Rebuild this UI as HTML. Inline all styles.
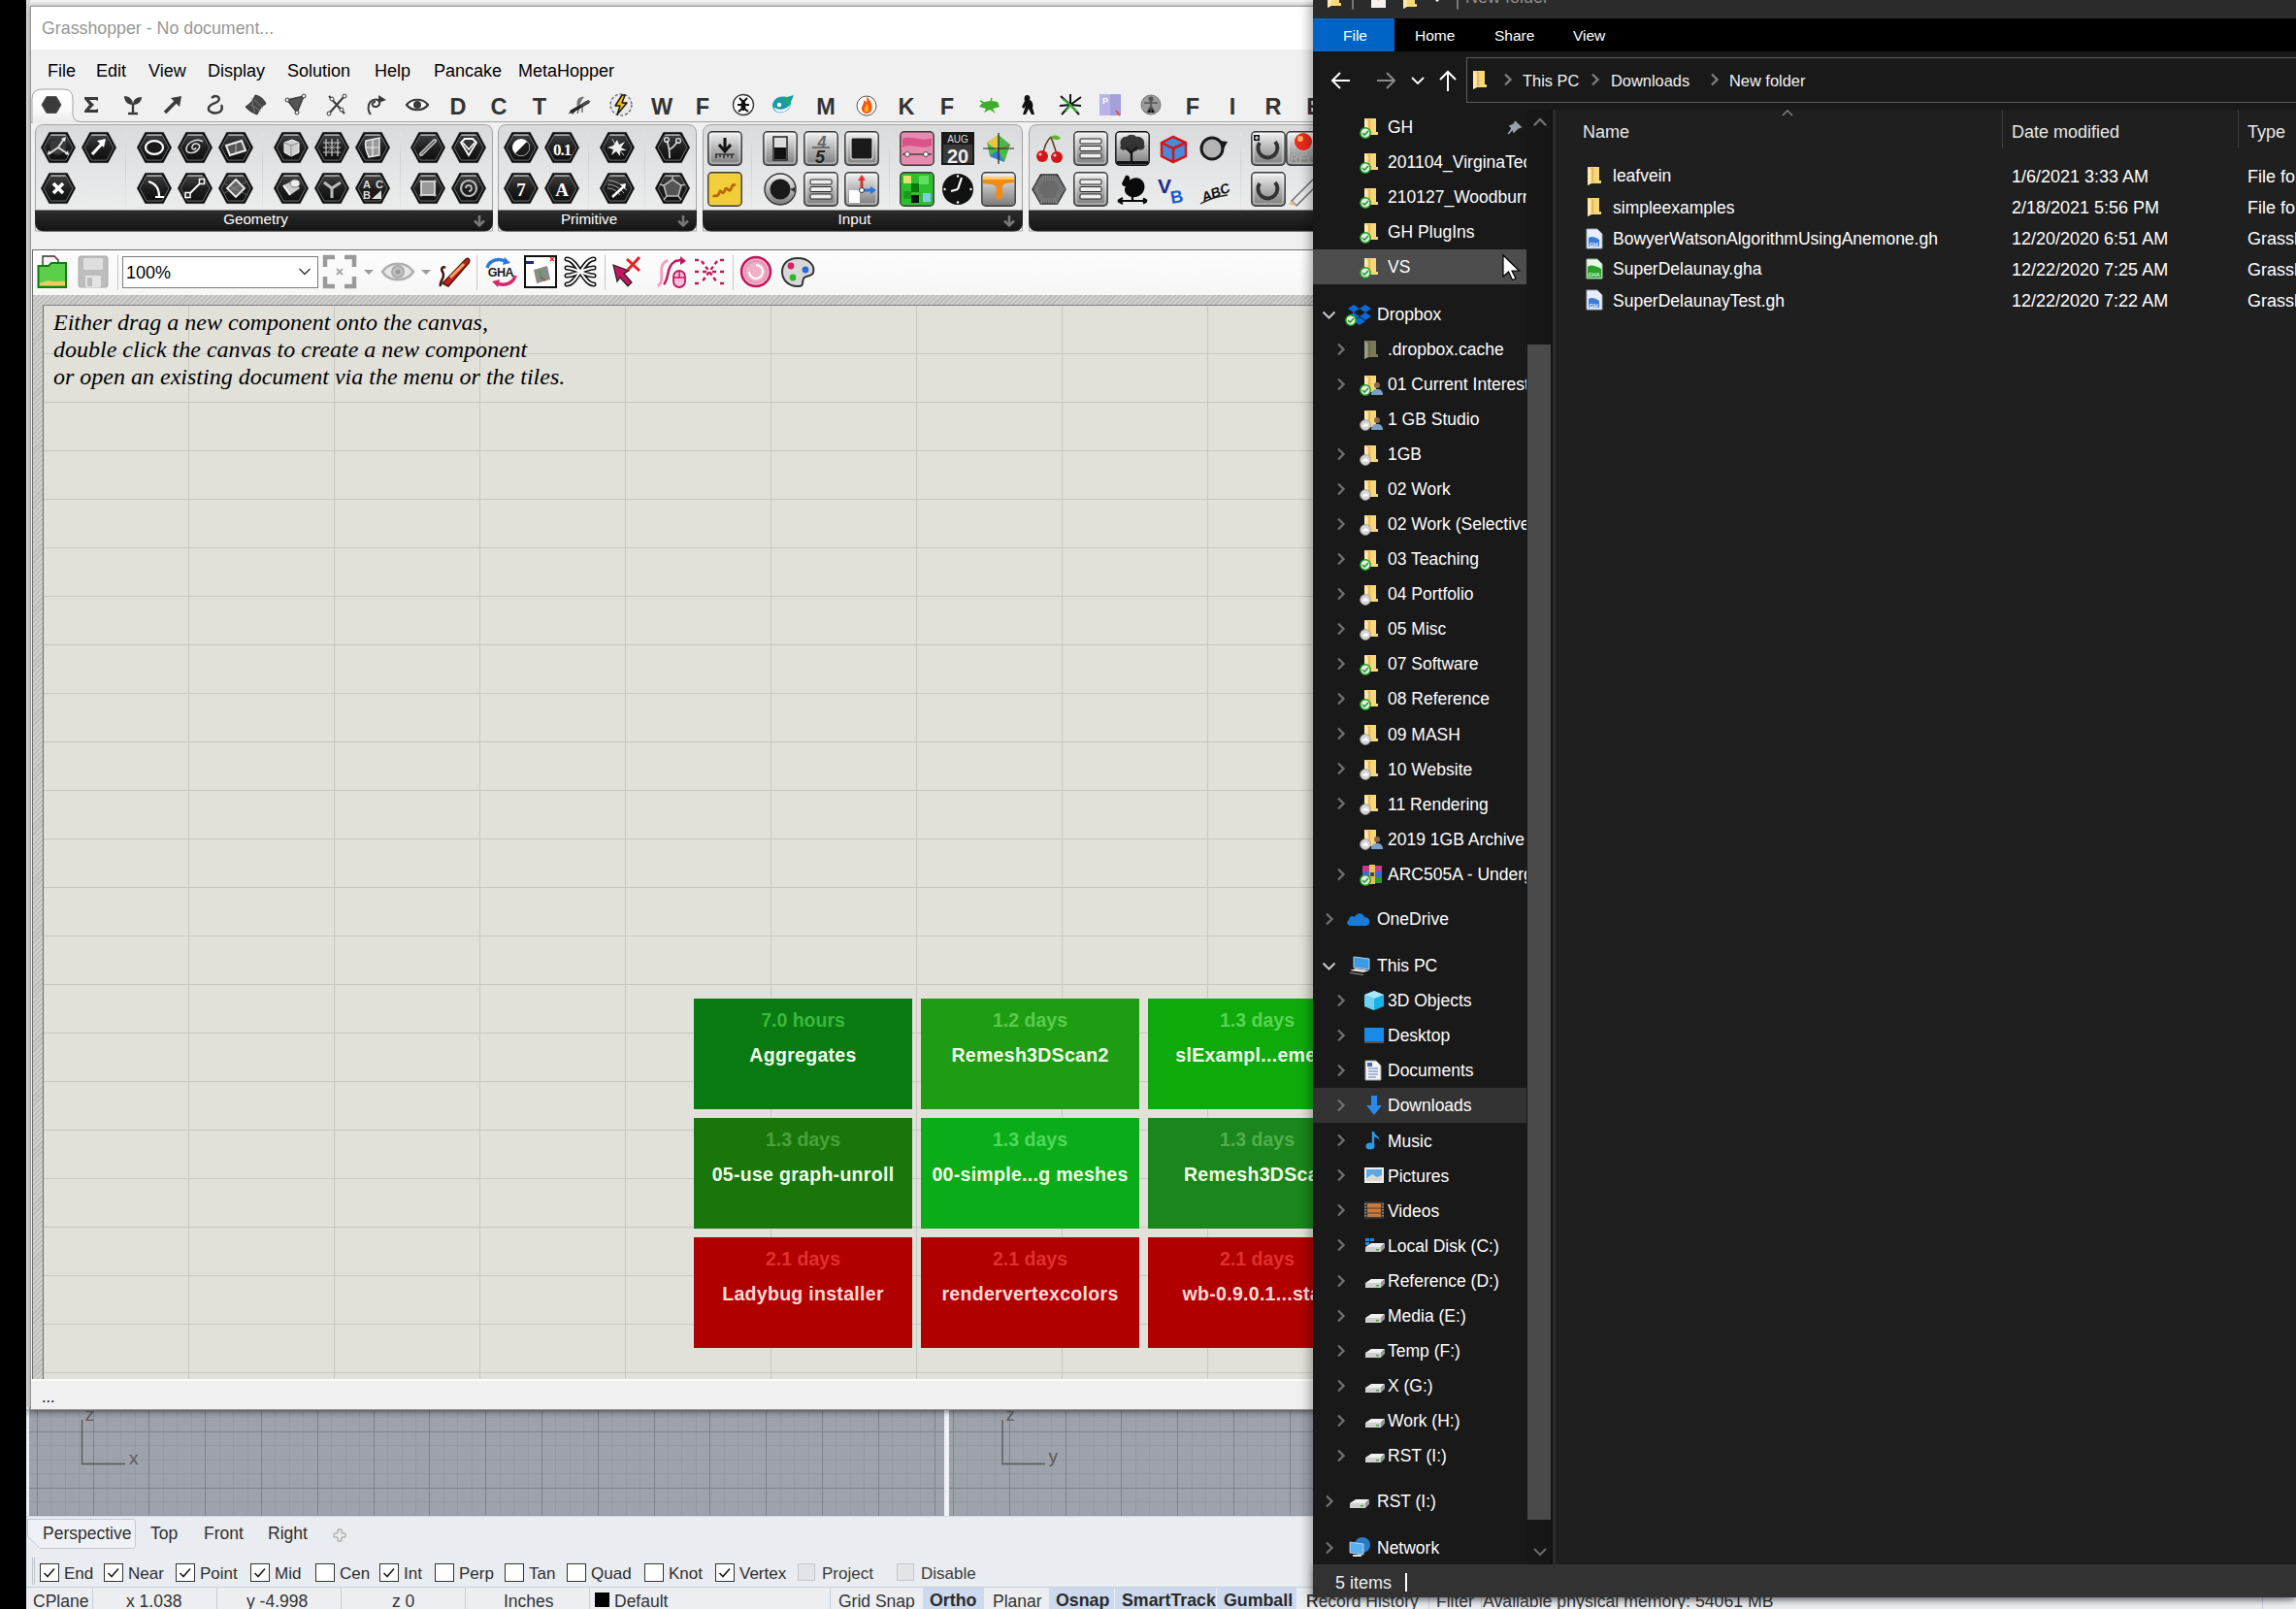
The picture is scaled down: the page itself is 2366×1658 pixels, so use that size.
<!DOCTYPE html><html><head><meta charset="utf-8"><title>Grasshopper</title><style>
*{margin:0;padding:0;box-sizing:border-box}
html,body{width:2366px;height:1658px;overflow:hidden;background:#000}
body{position:relative;font-family:"Liberation Sans",sans-serif}
.a{position:absolute}
.t{position:absolute;white-space:nowrap;line-height:1}
svg{position:absolute;overflow:visible}
</style></head><body>
<div class="a" style="left:27px;top:0;width:2339px;height:1658px;background:#e9ecf0"></div>
<div class="a" style="left:27px;top:0;width:2339px;height:8px;background:linear-gradient(#f4f4f4,#d8d8d8)"></div>
<div class="a" style="left:28px;top:0;width:3px;height:1450px;background:#d6d7d9"></div>
<div class="a" style="left:27px;top:1450px;width:3px;height:112px;background:#eef2f7"></div>
<svg style="left:30px;top:1450px" width="943" height="112" viewBox="0 0 943 112"><rect width="943" height="112" fill="#9ea3ab"/><path d="M22.5 0V112 M37.5 0V112 M51.5 0V112 M80.5 0V112 M94.5 0V112 M109.5 0V112 M138.5 0V112 M152.5 0V112 M167.5 0V112 M196.5 0V112 M210.5 0V112 M225.5 0V112 M253.5 0V112 M268.5 0V112 M282.5 0V112 M311.5 0V112 M326.5 0V112 M340.5 0V112 M369.5 0V112 M384.5 0V112 M398.5 0V112 M427.5 0V112 M441.5 0V112 M456.5 0V112 M485.5 0V112 M499.5 0V112 M514.5 0V112 M542.5 0V112 M557.5 0V112 M571.5 0V112 M600.5 0V112 M615.5 0V112 M629.5 0V112 M658.5 0V112 M672.5 0V112 M687.5 0V112 M716.5 0V112 M730.5 0V112 M745.5 0V112 M774.5 0V112 M788.5 0V112 M803.5 0V112 M831.5 0V112 M846.5 0V112 M860.5 0V112 M889.5 0V112 M904.5 0V112 M918.5 0V112 M0 10.5H943 M0 39.5H943 M0 54.5H943 M0 68.5H943 M0 97.5H943 M0 111.5H943" stroke="#939aa2" stroke-width="1" fill="none"/><path d="M8.5 0V112 M66.5 0V112 M123.5 0V112 M181.5 0V112 M239.5 0V112 M297.5 0V112 M355.5 0V112 M412.5 0V112 M470.5 0V112 M528.5 0V112 M586.5 0V112 M644.5 0V112 M701.5 0V112 M759.5 0V112 M817.5 0V112 M875.5 0V112 M933.5 0V112 M0 25.5H943 M0 83.5H943" stroke="#7e848c" stroke-width="1" fill="none"/></svg>
<div class="a" style="left:973px;top:1450px;width:5px;height:112px;background:#eef2f7"></div>
<svg style="left:978px;top:1450px" width="400" height="112" viewBox="0 0 400 112"><rect width="400" height="112" fill="#9ea3ab"/><path d="M18.5 0V112 M33.5 0V112 M47.5 0V112 M76.5 0V112 M91.5 0V112 M105.5 0V112 M134.5 0V112 M149.5 0V112 M163.5 0V112 M192.5 0V112 M206.5 0V112 M221.5 0V112 M250.5 0V112 M264.5 0V112 M279.5 0V112 M307.5 0V112 M322.5 0V112 M336.5 0V112 M365.5 0V112 M380.5 0V112 M394.5 0V112 M0 10.5H400 M0 39.5H400 M0 54.5H400 M0 68.5H400 M0 97.5H400 M0 111.5H400" stroke="#939aa2" stroke-width="1" fill="none"/><path d="M4.5 0V112 M62.5 0V112 M120.5 0V112 M177.5 0V112 M235.5 0V112 M293.5 0V112 M351.5 0V112 M0 25.5H400 M0 83.5H400" stroke="#7e848c" stroke-width="1" fill="none"/></svg>
<div class="a" style="left:27px;top:1452px;width:1340px;height:9px;background:linear-gradient(rgba(0,0,0,.22),rgba(0,0,0,0))"></div>
<svg style="left:0;top:0" width="2366" height="1658"><path d="M84.5 1463V1508.5H129M1033 1463V1508.5H1077" stroke="#555" stroke-width="1.3" fill="none"/></svg>
<div class="t" style="left:87.5px;top:1448.4px;font-size:19px;color:#5a5a5a;">z</div>
<div class="t" style="left:133px;top:1493.4px;font-size:19px;color:#5a5a5a;">x</div>
<div class="t" style="left:1036.5px;top:1448.4px;font-size:19px;color:#5a5a5a;">z</div>
<div class="t" style="left:1080.5px;top:1490.9px;font-size:19px;color:#5a5a5a;">y</div>
<div class="a" style="left:27px;top:1562px;width:1340px;height:1px;background:#d0d8e2"></div>
<svg style="left:0;top:0" width="400" height="1658"><path d="M28.5 1565.5H137Q139.5 1565.5 139.5 1568V1592.5Q139.5 1595.5 137 1595.5H41L28.5 1583Z" fill="#eef1f5" stroke="#c3cad4" stroke-width="1"/></svg>
<div class="t" style="left:44px;top:1572.2px;font-size:17.5px;color:#2e2e2e;">Perspective</div>
<div class="t" style="left:155px;top:1572.2px;font-size:17.5px;color:#2e2e2e;">Top</div>
<div class="t" style="left:210px;top:1572.2px;font-size:17.5px;color:#2e2e2e;">Front</div>
<div class="t" style="left:276px;top:1572.2px;font-size:17.5px;color:#2e2e2e;">Right</div>
<svg style="left:343px;top:1575px" width="14" height="14"><path d="M5 1H9V5H13V9H9V13H5V9H1V5H5Z" fill="none" stroke="#9a9a9a" stroke-width="1"/></svg>
<div class="a" style="left:33px;top:1605px;width:1px;height:28px;background:#c0c6ce"></div><div class="a" style="left:35px;top:1605px;width:1px;height:28px;background:#c0c6ce"></div>
<div class="a" style="left:41px;top:1610.5px;width:19.5px;height:19.5px;border:1.5px solid #333;background:#fff"></div>
<svg style="left:41px;top:1610.5px" width="19.5" height="19.5"><path d="M4.5 10L8 13.5L15 5.5" stroke="#222" stroke-width="1.7" fill="none"/></svg>
<div class="t" style="left:66px;top:1612.6px;font-size:17px;color:#2e2e2e;">End</div>
<div class="a" style="left:107px;top:1610.5px;width:19.5px;height:19.5px;border:1.5px solid #333;background:#fff"></div>
<svg style="left:107px;top:1610.5px" width="19.5" height="19.5"><path d="M4.5 10L8 13.5L15 5.5" stroke="#222" stroke-width="1.7" fill="none"/></svg>
<div class="t" style="left:132px;top:1612.6px;font-size:17px;color:#2e2e2e;">Near</div>
<div class="a" style="left:181px;top:1610.5px;width:19.5px;height:19.5px;border:1.5px solid #333;background:#fff"></div>
<svg style="left:181px;top:1610.5px" width="19.5" height="19.5"><path d="M4.5 10L8 13.5L15 5.5" stroke="#222" stroke-width="1.7" fill="none"/></svg>
<div class="t" style="left:206px;top:1612.6px;font-size:17px;color:#2e2e2e;">Point</div>
<div class="a" style="left:258px;top:1610.5px;width:19.5px;height:19.5px;border:1.5px solid #333;background:#fff"></div>
<svg style="left:258px;top:1610.5px" width="19.5" height="19.5"><path d="M4.5 10L8 13.5L15 5.5" stroke="#222" stroke-width="1.7" fill="none"/></svg>
<div class="t" style="left:283px;top:1612.6px;font-size:17px;color:#2e2e2e;">Mid</div>
<div class="a" style="left:325px;top:1610.5px;width:19.5px;height:19.5px;border:1.5px solid #333;background:#fff"></div>
<div class="t" style="left:350px;top:1612.6px;font-size:17px;color:#2e2e2e;">Cen</div>
<div class="a" style="left:391px;top:1610.5px;width:19.5px;height:19.5px;border:1.5px solid #333;background:#fff"></div>
<svg style="left:391px;top:1610.5px" width="19.5" height="19.5"><path d="M4.5 10L8 13.5L15 5.5" stroke="#222" stroke-width="1.7" fill="none"/></svg>
<div class="t" style="left:416px;top:1612.6px;font-size:17px;color:#2e2e2e;">Int</div>
<div class="a" style="left:448px;top:1610.5px;width:19.5px;height:19.5px;border:1.5px solid #333;background:#fff"></div>
<div class="t" style="left:473px;top:1612.6px;font-size:17px;color:#2e2e2e;">Perp</div>
<div class="a" style="left:520px;top:1610.5px;width:19.5px;height:19.5px;border:1.5px solid #333;background:#fff"></div>
<div class="t" style="left:545px;top:1612.6px;font-size:17px;color:#2e2e2e;">Tan</div>
<div class="a" style="left:584px;top:1610.5px;width:19.5px;height:19.5px;border:1.5px solid #333;background:#fff"></div>
<div class="t" style="left:609px;top:1612.6px;font-size:17px;color:#2e2e2e;">Quad</div>
<div class="a" style="left:664px;top:1610.5px;width:19.5px;height:19.5px;border:1.5px solid #333;background:#fff"></div>
<div class="t" style="left:689px;top:1612.6px;font-size:17px;color:#2e2e2e;">Knot</div>
<div class="a" style="left:737px;top:1610.5px;width:19.5px;height:19.5px;border:1.5px solid #333;background:#fff"></div>
<svg style="left:737px;top:1610.5px" width="19.5" height="19.5"><path d="M4.5 10L8 13.5L15 5.5" stroke="#222" stroke-width="1.7" fill="none"/></svg>
<div class="t" style="left:762px;top:1612.6px;font-size:17px;color:#2e2e2e;">Vertex</div>
<div class="a" style="left:822px;top:1611px;width:18px;height:18px;border:1px solid #c4c8ce;background:#e2e4e8"></div>
<div class="t" style="left:847px;top:1612.6px;font-size:17px;color:#3a3a3a;">Project</div>
<div class="a" style="left:924px;top:1611px;width:18px;height:18px;border:1px solid #c4c8ce;background:#e2e4e8"></div>
<div class="t" style="left:949px;top:1612.6px;font-size:17px;color:#3a3a3a;">Disable</div>
<div class="a" style="left:27px;top:1635px;width:2339px;height:1px;background:#c6cfdb"></div>
<div class="a" style="left:27px;top:1636px;width:2339px;height:22px;background:#eceef2"></div>
<div class="a" style="left:95px;top:1636px;width:1px;height:22px;background:#c6cfdb"></div>
<div class="a" style="left:223px;top:1636px;width:1px;height:22px;background:#c6cfdb"></div>
<div class="a" style="left:351px;top:1636px;width:1px;height:22px;background:#c6cfdb"></div>
<div class="a" style="left:479px;top:1636px;width:1px;height:22px;background:#c6cfdb"></div>
<div class="a" style="left:607px;top:1636px;width:1px;height:22px;background:#c6cfdb"></div>
<div class="a" style="left:855px;top:1636px;width:1px;height:22px;background:#c6cfdb"></div>
<div class="t" style="left:34px;top:1641.7px;font-size:17.5px;color:#333;">CPlane</div>
<div class="t" style="left:130px;top:1641.7px;font-size:17.5px;color:#333;">x 1.038</div>
<div class="t" style="left:254px;top:1641.7px;font-size:17.5px;color:#333;">y -4.998</div>
<div class="t" style="left:404px;top:1641.7px;font-size:17.5px;color:#333;">z 0</div>
<div class="t" style="left:519px;top:1641.7px;font-size:17.5px;color:#333;">Inches</div>
<div class="t" style="left:633px;top:1641.7px;font-size:17.5px;color:#333;">Default</div>
<div class="t" style="left:864px;top:1641.7px;font-size:17.5px;color:#333;">Grid Snap</div>
<div class="t" style="left:1023px;top:1641.7px;font-size:17.5px;color:#333;">Planar</div>
<div class="t" style="left:1346px;top:1641.7px;font-size:17.5px;color:#333;">Record History</div>
<div class="t" style="left:1480px;top:1641.7px;font-size:17.5px;color:#333;">Filter</div>
<div class="t" style="left:1528px;top:1641.5px;font-size:17.7px;color:#333;">Available physical memory: 54061 MB</div>
<div class="a" style="left:613px;top:1641px;width:15px;height:15px;background:#000"></div>
<div class="a" style="left:951px;top:1636px;width:63px;height:22px;background:#cdd9ed"></div>
<div class="t" style="left:958px;top:1641.4px;font-size:17.8px;color:#2a2a2a;font-weight:bold">Ortho</div>
<div class="a" style="left:1081px;top:1636px;width:67px;height:22px;background:#cdd9ed"></div>
<div class="t" style="left:1088px;top:1641.4px;font-size:17.8px;color:#2a2a2a;font-weight:bold">Osnap</div>
<div class="a" style="left:1149px;top:1636px;width:104px;height:22px;background:#cdd9ed"></div>
<div class="t" style="left:1156px;top:1641.4px;font-size:17.8px;color:#2a2a2a;font-weight:bold">SmartTrack</div>
<div class="a" style="left:1254px;top:1636px;width:82px;height:22px;background:#cdd9ed"></div>
<div class="t" style="left:1261px;top:1641.4px;font-size:17.8px;color:#2a2a2a;font-weight:bold">Gumball</div>
<div class="t" style="left:1346px;top:1641.7px;font-size:17.5px;color:#333;">R</div>
<div class="a" style="left:1472px;top:1646px;width:1px;height:12px;background:#c6cfdb"></div>
<div class="a" style="left:1526px;top:1646px;width:1px;height:12px;background:#c6cfdb"></div>
<div class="a" style="left:2331px;top:1646px;width:1px;height:12px;background:#c6cfdb"></div>
<div class="a" style="left:31px;top:6px;width:1400px;height:1447px;background:#f0f0f0;border:1px solid #9a9a9a;box-shadow:0 1px 5px rgba(0,0,0,.35)"></div>
<div class="a" style="left:32px;top:7px;width:1400px;height:44px;background:#fff"></div>
<div class="t" style="left:43px;top:20.9px;font-size:17.8px;color:#979797;">Grasshopper - No document...</div>
<div class="t" style="left:49px;top:63.8px;font-size:18px;color:#000;">File</div>
<div class="t" style="left:99px;top:63.8px;font-size:18px;color:#000;">Edit</div>
<div class="t" style="left:153px;top:63.8px;font-size:18px;color:#000;">View</div>
<div class="t" style="left:214px;top:63.8px;font-size:18px;color:#000;">Display</div>
<div class="t" style="left:296px;top:63.8px;font-size:18px;color:#000;">Solution</div>
<div class="t" style="left:386px;top:63.8px;font-size:18px;color:#000;">Help</div>
<div class="t" style="left:447px;top:63.8px;font-size:18px;color:#000;">Pancake</div>
<div class="t" style="left:534px;top:63.8px;font-size:18px;color:#000;">MetaHopper</div>
<div class="a" style="left:33px;top:256.5px;width:1400px;height:1.5px;background:#6e6e6e"></div>
<div class="a" style="left:33px;top:257px;width:1px;height:47px;background:#6e6e6e"></div>
<div class="a" style="left:34px;top:258px;width:1400px;height:46px;background:linear-gradient(#fdfdfd,#f6f6f6)"></div>
<svg width="0" height="0" style="position:absolute"><defs>
<linearGradient id="hg" x1="0" y1="0" x2="0" y2="1"><stop offset="0" stop-color="#404040"/><stop offset=".5" stop-color="#1f1f1f"/><stop offset="1" stop-color="#0f0f0f"/></linearGradient>
<linearGradient id="hgr" x1="0" y1="0" x2="0" y2="1"><stop offset="0" stop-color="#777"/><stop offset="1" stop-color="#222"/></linearGradient>
<linearGradient id="pg" x1="0" y1="0" x2="0" y2="1"><stop offset="0" stop-color="#d9dadc"/><stop offset=".5" stop-color="#e5e6e7"/><stop offset="1" stop-color="#f0f0f0"/></linearGradient>
<linearGradient id="sqg" x1="0" y1="0" x2="0" y2="1"><stop offset="0" stop-color="#f4f4f4"/><stop offset=".5" stop-color="#b5b5b5"/><stop offset="1" stop-color="#7a7a7a"/></linearGradient>
<linearGradient id="lbg" x1="0" y1="0" x2="0" y2="1"><stop offset="0" stop-color="#2c2c2c"/><stop offset="1" stop-color="#141414"/></linearGradient>
<linearGradient id="wg" x1="0" y1="0" x2="0" y2="1"><stop offset="0" stop-color="#ffffff"/><stop offset="1" stop-color="#9a9a9a"/></linearGradient>
<symbol id="hx" viewBox="0 0 36 32"><path d="M0.4 16L8.7 0.4H27.3L35.6 16L27.3 31.6H8.7Z" fill="#0b0b0b" stroke="#0b0b0b" stroke-width=".6" stroke-linejoin="round"/><path d="M2.9 16L10.1 2.9H25.9L33.1 16L25.9 29.1H10.1Z" fill="url(#hg)" stroke="#7a7a7a" stroke-width=".9"/><path d="M10.4 3.1H25.6" stroke="#e0e0e0" stroke-width="1"/></symbol>
<symbol id="sq" viewBox="0 0 36 36"><rect x=".8" y=".8" width="34.4" height="34.4" rx="4" fill="url(#sqg)" stroke="#3a3a3a" stroke-width="1.4"/><rect x="3" y="3" width="30" height="30" rx="2.5" fill="none" stroke="#fff" stroke-opacity=".6" stroke-width="1"/></symbol>
</defs></svg>
<div class="a" style="left:32px;top:125px;width:1330px;height:1px;background:#a3a3a3"></div>
<svg style="left:32px;top:91px" width="60" height="36"><defs><linearGradient id="tabg" x1="0" y1="0" x2="0" y2="1"><stop offset="0" stop-color="#fff"/><stop offset=".6" stop-color="#fafafa"/><stop offset="1" stop-color="#e9e9e9"/></linearGradient></defs><path d="M1 36V11Q1 1 11 1H34Q43 1 43 11V26Q43 34.5 52 34.5H60" fill="url(#tabg)" stroke="#a3a3a3" stroke-width="1"/></svg>
<svg style="left:40px;top:95px" width="26" height="26" viewBox="0 0 26 26"><path d="M3 13L8 4.5H18L23 13L18 21.5H8Z" fill="#3b3b3b" stroke="#555" stroke-width="1"/></svg>
<svg style="left:81px;top:95px" width="26" height="26" viewBox="0 0 26 26"><path d="M6 5H20V9L18 8H11L16 13L11 18H18L20 17V21H6V19L11 13L6 7Z" fill="#3a3a3a"/></svg>
<svg style="left:124px;top:95px" width="26" height="26" viewBox="0 0 26 26"><path d="M13 22V12M8 22H18" stroke="#3a3a3a" stroke-width="2.4" fill="none"/><path d="M13 13C7 13 4 9 4 4C10 4 13 8 13 13Z M13 13C19 13 22 9 22 5C16 5 13 8 13 13Z" fill="#3a3a3a"/></svg>
<svg style="left:165px;top:95px" width="26" height="26" viewBox="0 0 26 26"><path d="M5 21L17 9" stroke="#3a3a3a" stroke-width="3.5"/><path d="M11 6L22 4L20 15Z" fill="#3a3a3a"/></svg>
<svg style="left:208px;top:95px" width="26" height="26" viewBox="0 0 26 26"><path d="M10 6C14 2 20 5 17 9C14 12 8 12 7 16C6 21 14 23 19 20C21 18 21 15 20 13" stroke="#3a3a3a" stroke-width="2.4" fill="none"/></svg>
<svg style="left:250px;top:95px" width="26" height="26" viewBox="0 0 26 26"><path d="M3 15C8 12 11 8 13 3C18 4 22 7 24 12C20 14 17 18 15 23C10 21 6 19 3 15Z" fill="#474747" stroke="#333" stroke-width="1"/><path d="M8 13C12 15 16 17 19 20M12 8C15 10 18 13 21 17M10 6C10 12 11 17 13 21" stroke="#888" stroke-width=".8" fill="none"/></svg>
<svg style="left:292px;top:95px" width="26" height="26" viewBox="0 0 26 26"><path d="M4 8L21 4L14 21Z" fill="#555" stroke="#3a3a3a" stroke-width="1.5"/><circle cx="4" cy="8" r="2" fill="#eee" stroke="#3a3a3a"/><circle cx="21" cy="4" r="2" fill="#eee" stroke="#3a3a3a"/><circle cx="14" cy="21" r="2" fill="#eee" stroke="#3a3a3a"/></svg>
<svg style="left:334px;top:95px" width="26" height="26" viewBox="0 0 26 26"><path d="M5 22L21 4M5 4L21 22" stroke="#3a3a3a" stroke-width="2"/><circle cx="5" cy="22" r="2" fill="#eee" stroke="#3a3a3a"/><circle cx="21" cy="4" r="2" fill="#eee" stroke="#3a3a3a"/><circle cx="8" cy="7" r="2" fill="#eee" stroke="#3a3a3a"/><circle cx="18" cy="18" r="2" fill="#eee" stroke="#3a3a3a"/></svg>
<svg style="left:375px;top:95px" width="26" height="26" viewBox="0 0 26 26"><path d="M7 23C3 18 4 10 10 8C16 6 19 13 13 15C8 16 7 10 12 10" stroke="#3a3a3a" stroke-width="2" fill="none"/><path d="M15 3L23 8L15 11Z" fill="#3a3a3a"/></svg>
<svg style="left:417px;top:95px" width="26" height="26" viewBox="0 0 26 26"><path d="M2 13C7 6 19 6 24 13C19 20 7 20 2 13Z" fill="#fff" stroke="#3a3a3a" stroke-width="2.2"/><circle cx="13" cy="13" r="4" fill="#3a3a3a"/></svg>
<div class="t" style="left:452px;width:40px;text-align:center;top:99px;font-size:23.5px;font-weight:bold;color:#333">D</div>
<div class="t" style="left:494px;width:40px;text-align:center;top:99px;font-size:23.5px;font-weight:bold;color:#333">C</div>
<div class="t" style="left:536px;width:40px;text-align:center;top:99px;font-size:23.5px;font-weight:bold;color:#333">T</div>
<div class="t" style="left:662px;width:40px;text-align:center;top:99px;font-size:23.5px;font-weight:bold;color:#333">W</div>
<div class="t" style="left:704px;width:40px;text-align:center;top:99px;font-size:23.5px;font-weight:bold;color:#333">F</div>
<div class="t" style="left:831px;width:40px;text-align:center;top:99px;font-size:23.5px;font-weight:bold;color:#333">M</div>
<div class="t" style="left:914px;width:40px;text-align:center;top:99px;font-size:23.5px;font-weight:bold;color:#333">K</div>
<div class="t" style="left:956px;width:40px;text-align:center;top:99px;font-size:23.5px;font-weight:bold;color:#333">F</div>
<div class="t" style="left:1209px;width:40px;text-align:center;top:99px;font-size:23.5px;font-weight:bold;color:#333">F</div>
<div class="t" style="left:1250px;width:40px;text-align:center;top:99px;font-size:23.5px;font-weight:bold;color:#333">I</div>
<div class="t" style="left:1292px;width:40px;text-align:center;top:99px;font-size:23.5px;font-weight:bold;color:#333">R</div>
<div class="t" style="left:1334px;width:40px;text-align:center;top:99px;font-size:23.5px;font-weight:bold;color:#333">E</div>
<svg style="left:585px;top:95px" width="26" height="26" viewBox="0 0 26 26"><path d="M4 20L21 10" stroke="#222" stroke-width="3.5" stroke-linecap="round"/><path d="M10 15C8 8 12 4 17 5C14 8 13 11 12 14Z M13 14C16 9 21 8 24 9C20 12 17 14 14 15Z" fill="#555" opacity=".8"/><path d="M8 18L5 23M12 16L10 22M15 15L15 21M3 21L1 22" stroke="#333" stroke-width="1"/></svg>
<svg style="left:627px;top:95px" width="26" height="26" viewBox="0 0 26 26"><circle cx="13" cy="13" r="11" fill="#e8e8e8" stroke="#555" stroke-width="1.2" stroke-dasharray="3 2"/><path d="M14 3L7 14H12L9 23L19 11H14L17 3Z" fill="#f2c01a" stroke="#111" stroke-width="1.4" stroke-linejoin="round"/></svg>
<svg style="left:753px;top:95px" width="26" height="26" viewBox="0 0 26 26"><circle cx="13" cy="13" r="10.5" fill="#fafafa" stroke="#333" stroke-width="1.3"/><path d="M13 8V19M9 6L13 10L17 6M7 13H19M8 20L13 16L18 20" stroke="#111" stroke-width="2" fill="none"/><ellipse cx="13" cy="14" rx="2.5" ry="5" fill="#111"/></svg>
<svg style="left:794px;top:95px" width="26" height="26" viewBox="0 0 26 26"><path d="M2 13C3 6 10 3 17 5L24 3L21 10C22 17 15 22 8 21C4 20 2 17 2 13Z" fill="#1a9aa8"/><path d="M3 15C8 19 16 19 21 12C19 20 10 23 5 19Z" fill="#e8f4f8"/><circle cx="9" cy="13" r="2.2" fill="#fff"/><path d="M14 5L20 12" stroke="#2ab050" stroke-width="2.5"/></svg>
<svg style="left:880px;top:95px" width="26" height="26" viewBox="0 0 26 26"><circle cx="13" cy="14" r="10" fill="#fff" stroke="#555" stroke-width="1"/><path d="M13 4C18 10 20 14 18 19C16 23 9 23 8 18C7 14 11 12 10 8C13 10 14 12 13 4Z" fill="#f05a10"/><path d="M13 12C15 15 16 17 14 20C12 21 10 19 11 17Z" fill="#ffb020"/></svg>
<svg style="left:1006px;top:95px" width="26" height="26" viewBox="0 0 26 26"><path d="M3 15C7 9 14 8 22 10L24 15L17 17L20 22L14 18L8 21L10 17Z" fill="#3dae2b"/><path d="M4 9L10 12M16 6L15 10" stroke="#3dae2b" stroke-width="1.5"/></svg>
<svg style="left:1047px;top:95px" width="26" height="26" viewBox="0 0 26 26"><path d="M11 3C14 3 15 5 14 8C17 9 18 13 17 16L19 23H16L13 17L10 23H7L10 14L8 17L6 15L9 9C8 6 9 3 11 3Z" fill="#111"/></svg>
<svg style="left:1090px;top:95px" width="26" height="26" viewBox="0 0 26 26"><path d="M13 13L3 4M13 13L24 5M13 13L4 23M13 13L22 23M13 13L13 2M13 13L2 14M13 13L24 14" stroke="#111" stroke-width="2"/><path d="M13 13L5 7M13 13L20 20M13 13L8 20" stroke="#39b339" stroke-width="2"/></svg>
<svg style="left:1131px;top:95px" width="26" height="26" viewBox="0 0 26 26"><rect x="2" y="2" width="22" height="22" fill="#b8b4e8"/><rect x="13" y="2" width="11" height="22" fill="#a3a0dc"/><text x="5" y="12" font-size="9" fill="#fff" font-family="Liberation Sans" font-weight="bold">P</text><path d="M19 19L23 24" stroke="#e44" stroke-width="2"/></svg>
<svg style="left:1173px;top:95px" width="26" height="26" viewBox="0 0 26 26"><circle cx="13" cy="13" r="10" fill="#9a9a9a"/><circle cx="13" cy="13" r="10" fill="none" stroke="#777"/><path d="M13 5V21M6 11H20M9 21L13 14L17 21" stroke="#555" stroke-width="1.5"/><circle cx="13" cy="7" r="2.5" fill="#555"/></svg>
<svg style="left:36px;top:129px" width="472" height="110" viewBox="0 1 472 110"><path d="M0.5 110V9Q0.5 0.5 9 0.5H463Q471.5 0.5 471.5 9V110Z" fill="url(#pg)" stroke="#a4a4a4" stroke-width="1"/><path d="M0.5 89H471.5V101Q471.5 110 463 110H9Q0.5 110 0.5 101Z" fill="url(#lbg)" stroke="#2a2a2a" stroke-width="1"/><path d="M458 94V104M453 99.5L458 104.5L463 99.5" stroke="#777" stroke-width="2.6" fill="none"/></svg>
<div class="t" style="left:36px;width:455px;text-align:center;top:217.9px;font-size:15.2px;color:#fff">Geometry</div>
<svg style="left:513px;top:129px" width="205" height="110" viewBox="0 1 205 110"><path d="M0.5 110V9Q0.5 0.5 9 0.5H196Q204.5 0.5 204.5 9V110Z" fill="url(#pg)" stroke="#a4a4a4" stroke-width="1"/><path d="M0.5 89H204.5V101Q204.5 110 196 110H9Q0.5 110 0.5 101Z" fill="url(#lbg)" stroke="#2a2a2a" stroke-width="1"/><path d="M191 94V104M186 99.5L191 104.5L196 99.5" stroke="#777" stroke-width="2.6" fill="none"/></svg>
<div class="t" style="left:513px;width:188px;text-align:center;top:217.9px;font-size:15.2px;color:#fff">Primitive</div>
<svg style="left:724px;top:129px" width="330" height="110" viewBox="0 1 330 110"><path d="M0.5 110V9Q0.5 0.5 9 0.5H321Q329.5 0.5 329.5 9V110Z" fill="url(#pg)" stroke="#a4a4a4" stroke-width="1"/><path d="M0.5 89H329.5V101Q329.5 110 321 110H9Q0.5 110 0.5 101Z" fill="url(#lbg)" stroke="#2a2a2a" stroke-width="1"/><path d="M316 94V104M311 99.5L316 104.5L321 99.5" stroke="#777" stroke-width="2.6" fill="none"/></svg>
<div class="t" style="left:724px;width:313px;text-align:center;top:217.9px;font-size:15.2px;color:#fff">Input</div>
<svg style="left:1060px;top:129px" width="340" height="110" viewBox="0 1 340 110"><path d="M0.5 110V9Q0.5 0.5 9 0.5H331Q339.5 0.5 339.5 9V110Z" fill="url(#pg)" stroke="#a4a4a4" stroke-width="1"/><path d="M0.5 89H339.5V101Q339.5 110 331 110H9Q0.5 110 0.5 101Z" fill="url(#lbg)" stroke="#2a2a2a" stroke-width="1"/></svg>
<div class="a" style="left:129px;top:136px;width:1px;height:80px;background:linear-gradient(#e2e3e6,#cfd0d3 40%,#e6e6e6)"></div>
<div class="a" style="left:270px;top:136px;width:1px;height:80px;background:linear-gradient(#e2e3e6,#cfd0d3 40%,#e6e6e6)"></div>
<div class="a" style="left:412px;top:136px;width:1px;height:80px;background:linear-gradient(#e2e3e6,#cfd0d3 40%,#e6e6e6)"></div>
<div class="a" style="left:606px;top:136px;width:1px;height:80px;background:linear-gradient(#e2e3e6,#cfd0d3 40%,#e6e6e6)"></div>
<div class="a" style="left:664px;top:136px;width:1px;height:80px;background:linear-gradient(#e2e3e6,#cfd0d3 40%,#e6e6e6)"></div>
<div class="a" style="left:774px;top:136px;width:1px;height:80px;background:linear-gradient(#e2e3e6,#cfd0d3 40%,#e6e6e6)"></div>
<div class="a" style="left:916px;top:136px;width:1px;height:80px;background:linear-gradient(#e2e3e6,#cfd0d3 40%,#e6e6e6)"></div>
<div class="a" style="left:1278px;top:136px;width:1px;height:80px;background:linear-gradient(#e2e3e6,#cfd0d3 40%,#e6e6e6)"></div>
<svg style="left:41.6px;top:136.0px" width="36" height="32" viewBox="0 0 36 32"><path d="M0.4 16L8.7 0.4H27.3L35.6 16L27.3 31.6H8.7Z" fill="#0b0b0b" stroke="#0b0b0b" stroke-width=".6" stroke-linejoin="round"/><path d="M2.9 16L10.1 2.9H25.9L33.1 16L25.9 29.1H10.1Z" fill="url(#hg)" stroke="#7a7a7a" stroke-width=".9"/><path d="M10.4 3.1H25.6" stroke="#e0e0e0" stroke-width="1"/><path d="M10 10L19 7L26 10L26 20L18 24L10 21Z" fill="#3a3a3a"/><path d="M18 16L9 22M18 16L27 22M18 16L24 7" stroke="#ddd" stroke-width="2"/><path d="M7 24L8 19L11 22Z M29 24L25 23L28 19Z M26 5L21 7L25 10Z" fill="#eee"/></svg>
<svg style="left:83.9px;top:136.0px" width="36" height="32" viewBox="0 0 36 32"><path d="M0.4 16L8.7 0.4H27.3L35.6 16L27.3 31.6H8.7Z" fill="#0b0b0b" stroke="#0b0b0b" stroke-width=".6" stroke-linejoin="round"/><path d="M2.9 16L10.1 2.9H25.9L33.1 16L25.9 29.1H10.1Z" fill="url(#hg)" stroke="#7a7a7a" stroke-width=".9"/><path d="M10.4 3.1H25.6" stroke="#e0e0e0" stroke-width="1"/><path d="M11 23L22 11" stroke="#fff" stroke-width="3.2"/><path d="M16 9L25 7L23 16Z" fill="#fff"/></svg>
<svg style="left:41.6px;top:178.0px" width="36" height="32" viewBox="0 0 36 32"><path d="M0.4 16L8.7 0.4H27.3L35.6 16L27.3 31.6H8.7Z" fill="#0b0b0b" stroke="#0b0b0b" stroke-width=".6" stroke-linejoin="round"/><path d="M2.9 16L10.1 2.9H25.9L33.1 16L25.9 29.1H10.1Z" fill="url(#hg)" stroke="#7a7a7a" stroke-width=".9"/><path d="M10.4 3.1H25.6" stroke="#e0e0e0" stroke-width="1"/><path d="M13 11L23 21M23 11L13 21" stroke="#fff" stroke-width="3.6"/></svg>
<svg style="left:140.9px;top:136.0px" width="36" height="32" viewBox="0 0 36 32"><path d="M0.4 16L8.7 0.4H27.3L35.6 16L27.3 31.6H8.7Z" fill="#0b0b0b" stroke="#0b0b0b" stroke-width=".6" stroke-linejoin="round"/><path d="M2.9 16L10.1 2.9H25.9L33.1 16L25.9 29.1H10.1Z" fill="url(#hg)" stroke="#7a7a7a" stroke-width=".9"/><path d="M10.4 3.1H25.6" stroke="#e0e0e0" stroke-width="1"/><ellipse cx="18" cy="16" rx="9" ry="6.8" stroke="#fff" stroke-width="2.2" fill="#1a1a1a"/></svg>
<svg style="left:183.0px;top:136.0px" width="36" height="32" viewBox="0 0 36 32"><path d="M0.4 16L8.7 0.4H27.3L35.6 16L27.3 31.6H8.7Z" fill="#0b0b0b" stroke="#0b0b0b" stroke-width=".6" stroke-linejoin="round"/><path d="M2.9 16L10.1 2.9H25.9L33.1 16L25.9 29.1H10.1Z" fill="url(#hg)" stroke="#7a7a7a" stroke-width=".9"/><path d="M10.4 3.1H25.6" stroke="#e0e0e0" stroke-width="1"/><path d="M26 10C21 6 10 10 9 17C8 23 18 23 22 17C25 12 17 10 15 15C14 18 18 19 19 16" stroke="#ddd" stroke-width="1.6" fill="none"/></svg>
<svg style="left:225.0px;top:136.0px" width="36" height="32" viewBox="0 0 36 32"><path d="M0.4 16L8.7 0.4H27.3L35.6 16L27.3 31.6H8.7Z" fill="#0b0b0b" stroke="#0b0b0b" stroke-width=".6" stroke-linejoin="round"/><path d="M2.9 16L10.1 2.9H25.9L33.1 16L25.9 29.1H10.1Z" fill="url(#hg)" stroke="#7a7a7a" stroke-width=".9"/><path d="M10.4 3.1H25.6" stroke="#e0e0e0" stroke-width="1"/><path d="M8 14L24 9L28 19L12 24Z" stroke="#eee" stroke-width="2" fill="#555"/><path d="M18 12V21" stroke="#bbb"/></svg>
<svg style="left:140.9px;top:178.0px" width="36" height="32" viewBox="0 0 36 32"><path d="M0.4 16L8.7 0.4H27.3L35.6 16L27.3 31.6H8.7Z" fill="#0b0b0b" stroke="#0b0b0b" stroke-width=".6" stroke-linejoin="round"/><path d="M2.9 16L10.1 2.9H25.9L33.1 16L25.9 29.1H10.1Z" fill="url(#hg)" stroke="#7a7a7a" stroke-width=".9"/><path d="M10.4 3.1H25.6" stroke="#e0e0e0" stroke-width="1"/><path d="M12 9C19 11 23 16 23 24M19 25H28" stroke="#fff" stroke-width="2.2" fill="none"/></svg>
<svg style="left:183.0px;top:178.0px" width="36" height="32" viewBox="0 0 36 32"><path d="M0.4 16L8.7 0.4H27.3L35.6 16L27.3 31.6H8.7Z" fill="#0b0b0b" stroke="#0b0b0b" stroke-width=".6" stroke-linejoin="round"/><path d="M2.9 16L10.1 2.9H25.9L33.1 16L25.9 29.1H10.1Z" fill="url(#hg)" stroke="#7a7a7a" stroke-width=".9"/><path d="M10.4 3.1H25.6" stroke="#e0e0e0" stroke-width="1"/><path d="M11 23L25 9" stroke="#fff" stroke-width="1.8"/><rect x="8" y="20.5" width="5" height="5" stroke="#fff" stroke-width="1.5" fill="#222"/><rect x="22.5" y="6.5" width="5" height="5" stroke="#fff" stroke-width="1.5" fill="#222"/></svg>
<svg style="left:225.0px;top:178.0px" width="36" height="32" viewBox="0 0 36 32"><path d="M0.4 16L8.7 0.4H27.3L35.6 16L27.3 31.6H8.7Z" fill="#0b0b0b" stroke="#0b0b0b" stroke-width=".6" stroke-linejoin="round"/><path d="M2.9 16L10.1 2.9H25.9L33.1 16L25.9 29.1H10.1Z" fill="url(#hg)" stroke="#7a7a7a" stroke-width=".9"/><path d="M10.4 3.1H25.6" stroke="#e0e0e0" stroke-width="1"/><path d="M18 7L27 16L18 25L9 16Z" stroke="#eee" stroke-width="1.8" fill="#666"/><path d="M6 11L30 23M6 21L30 9" stroke="#aaa" stroke-width=".8" opacity=".6"/></svg>
<svg style="left:281.7px;top:136.0px" width="36" height="32" viewBox="0 0 36 32"><path d="M0.4 16L8.7 0.4H27.3L35.6 16L27.3 31.6H8.7Z" fill="#0b0b0b" stroke="#0b0b0b" stroke-width=".6" stroke-linejoin="round"/><path d="M2.9 16L10.1 2.9H25.9L33.1 16L25.9 29.1H10.1Z" fill="url(#hg)" stroke="#7a7a7a" stroke-width=".9"/><path d="M10.4 3.1H25.6" stroke="#e0e0e0" stroke-width="1"/><path d="M11 11L19 8L26 11V21L18 25L11 21Z" fill="#cfcfcf" stroke="#fff" stroke-width="1"/><path d="M11 11L18 14L26 11M18 14V25" stroke="#888" stroke-width="1" fill="none"/></svg>
<svg style="left:324.0px;top:136.0px" width="36" height="32" viewBox="0 0 36 32"><path d="M0.4 16L8.7 0.4H27.3L35.6 16L27.3 31.6H8.7Z" fill="#0b0b0b" stroke="#0b0b0b" stroke-width=".6" stroke-linejoin="round"/><path d="M2.9 16L10.1 2.9H25.9L33.1 16L25.9 29.1H10.1Z" fill="url(#hg)" stroke="#7a7a7a" stroke-width=".9"/><path d="M10.4 3.1H25.6" stroke="#e0e0e0" stroke-width="1"/><path d="M9 11H27M9 16H27M9 21H27M12 7V25M18 7V25M24 7V25" stroke="#ccc" stroke-width="1.2"/><path d="M11 9L25 23M25 9L11 23" stroke="#999" stroke-width=".8"/></svg>
<svg style="left:366.0px;top:136.0px" width="36" height="32" viewBox="0 0 36 32"><path d="M0.4 16L8.7 0.4H27.3L35.6 16L27.3 31.6H8.7Z" fill="#0b0b0b" stroke="#0b0b0b" stroke-width=".6" stroke-linejoin="round"/><path d="M2.9 16L10.1 2.9H25.9L33.1 16L25.9 29.1H10.1Z" fill="url(#hg)" stroke="#7a7a7a" stroke-width=".9"/><path d="M10.4 3.1H25.6" stroke="#e0e0e0" stroke-width="1"/><path d="M11 9L25 6V24L14 26C12 20 9 16 11 9Z" fill="#999" stroke="#eee" stroke-width="1.4"/><path d="M18 7V25M11 16H25" stroke="#eee" stroke-width="1.2"/></svg>
<svg style="left:281.7px;top:178.0px" width="36" height="32" viewBox="0 0 36 32"><path d="M0.4 16L8.7 0.4H27.3L35.6 16L27.3 31.6H8.7Z" fill="#0b0b0b" stroke="#0b0b0b" stroke-width=".6" stroke-linejoin="round"/><path d="M2.9 16L10.1 2.9H25.9L33.1 16L25.9 29.1H10.1Z" fill="url(#hg)" stroke="#7a7a7a" stroke-width=".9"/><path d="M10.4 3.1H25.6" stroke="#e0e0e0" stroke-width="1"/><path d="M10 13L20 8L27 16L17 23Z" fill="#ccc"/><ellipse cx="22" cy="11" rx="5" ry="4" fill="#eee" stroke="#777"/><path d="M10 13L17 23" stroke="#fff" stroke-width="2"/></svg>
<svg style="left:324.0px;top:178.0px" width="36" height="32" viewBox="0 0 36 32"><path d="M0.4 16L8.7 0.4H27.3L35.6 16L27.3 31.6H8.7Z" fill="#0b0b0b" stroke="#0b0b0b" stroke-width=".6" stroke-linejoin="round"/><path d="M2.9 16L10.1 2.9H25.9L33.1 16L25.9 29.1H10.1Z" fill="url(#hg)" stroke="#7a7a7a" stroke-width=".9"/><path d="M10.4 3.1H25.6" stroke="#e0e0e0" stroke-width="1"/><path d="M18 16L10 10M18 16L27 10M18 16V26" stroke="#bbb" stroke-width="3"/></svg>
<svg style="left:366.0px;top:178.0px" width="36" height="32" viewBox="0 0 36 32"><path d="M0.4 16L8.7 0.4H27.3L35.6 16L27.3 31.6H8.7Z" fill="#0b0b0b" stroke="#0b0b0b" stroke-width=".6" stroke-linejoin="round"/><path d="M2.9 16L10.1 2.9H25.9L33.1 16L25.9 29.1H10.1Z" fill="url(#hg)" stroke="#7a7a7a" stroke-width=".9"/><path d="M10.4 3.1H25.6" stroke="#e0e0e0" stroke-width="1"/><text x="8" y="16" font-size="11" fill="#ddd" font-family="Liberation Sans" font-weight="bold">A</text><text x="21" y="16" font-size="11" fill="#ddd" font-family="Liberation Sans" font-weight="bold">C</text><text x="8" y="27" font-size="11" fill="#ddd" font-family="Liberation Sans" font-weight="bold">B</text><path d="M17 27L27 18V27Z" fill="#ddd"/></svg>
<svg style="left:423.0px;top:136.0px" width="36" height="32" viewBox="0 0 36 32"><path d="M0.4 16L8.7 0.4H27.3L35.6 16L27.3 31.6H8.7Z" fill="#0b0b0b" stroke="#0b0b0b" stroke-width=".6" stroke-linejoin="round"/><path d="M2.9 16L10.1 2.9H25.9L33.1 16L25.9 29.1H10.1Z" fill="url(#hg)" stroke="#7a7a7a" stroke-width=".9"/><path d="M10.4 3.1H25.6" stroke="#e0e0e0" stroke-width="1"/><path d="M11 23L25 9" stroke="#ccc" stroke-width="4" stroke-linecap="round"/><path d="M11 23L25 9" stroke="#555" stroke-width="1.5"/></svg>
<svg style="left:465.0px;top:136.0px" width="36" height="32" viewBox="0 0 36 32"><path d="M0.4 16L8.7 0.4H27.3L35.6 16L27.3 31.6H8.7Z" fill="#0b0b0b" stroke="#0b0b0b" stroke-width=".6" stroke-linejoin="round"/><path d="M2.9 16L10.1 2.9H25.9L33.1 16L25.9 29.1H10.1Z" fill="url(#hg)" stroke="#7a7a7a" stroke-width=".9"/><path d="M10.4 3.1H25.6" stroke="#e0e0e0" stroke-width="1"/><path d="M10 11L14 7H22L26 11L18 24Z" stroke="#fff" stroke-width="1.8" fill="#333"/><path d="M12 11L18 18L24 11" stroke="#fff" stroke-width="1.5" fill="none"/></svg>
<svg style="left:423.0px;top:178.0px" width="36" height="32" viewBox="0 0 36 32"><path d="M0.4 16L8.7 0.4H27.3L35.6 16L27.3 31.6H8.7Z" fill="#0b0b0b" stroke="#0b0b0b" stroke-width=".6" stroke-linejoin="round"/><path d="M2.9 16L10.1 2.9H25.9L33.1 16L25.9 29.1H10.1Z" fill="url(#hg)" stroke="#7a7a7a" stroke-width=".9"/><path d="M10.4 3.1H25.6" stroke="#e0e0e0" stroke-width="1"/><rect x="11" y="9" width="14" height="14" fill="#999" stroke="#eee" stroke-width="1.5"/><path d="M9 9H27M11 7V25M25 7V25M9 23H27" stroke="#ccc" stroke-width=".8"/></svg>
<svg style="left:465.0px;top:178.0px" width="36" height="32" viewBox="0 0 36 32"><path d="M0.4 16L8.7 0.4H27.3L35.6 16L27.3 31.6H8.7Z" fill="#0b0b0b" stroke="#0b0b0b" stroke-width=".6" stroke-linejoin="round"/><path d="M2.9 16L10.1 2.9H25.9L33.1 16L25.9 29.1H10.1Z" fill="url(#hg)" stroke="#7a7a7a" stroke-width=".9"/><path d="M10.4 3.1H25.6" stroke="#e0e0e0" stroke-width="1"/><circle cx="18" cy="16" r="8" stroke="#bbb" stroke-width="2.2" fill="none"/><path d="M15 16A3 3 0 1 1 18 19" stroke="#bbb" stroke-width="1.8" fill="none"/></svg>
<svg style="left:518.6px;top:136.0px" width="36" height="32" viewBox="0 0 36 32"><path d="M0.4 16L8.7 0.4H27.3L35.6 16L27.3 31.6H8.7Z" fill="#0b0b0b" stroke="#0b0b0b" stroke-width=".6" stroke-linejoin="round"/><path d="M2.9 16L10.1 2.9H25.9L33.1 16L25.9 29.1H10.1Z" fill="url(#hg)" stroke="#7a7a7a" stroke-width=".9"/><path d="M10.4 3.1H25.6" stroke="#e0e0e0" stroke-width="1"/><circle cx="18" cy="16" r="8" stroke="#fff" stroke-width="2" fill="#fff"/><path d="M24 10A8 8 0 0 1 12 22Z" fill="#1b1b1b"/></svg>
<svg style="left:561.0px;top:136.0px" width="36" height="32" viewBox="0 0 36 32"><path d="M0.4 16L8.7 0.4H27.3L35.6 16L27.3 31.6H8.7Z" fill="#0b0b0b" stroke="#0b0b0b" stroke-width=".6" stroke-linejoin="round"/><path d="M2.9 16L10.1 2.9H25.9L33.1 16L25.9 29.1H10.1Z" fill="url(#hg)" stroke="#7a7a7a" stroke-width=".9"/><path d="M10.4 3.1H25.6" stroke="#e0e0e0" stroke-width="1"/><text x="18" y="23.5" text-anchor="middle" font-size="17" fill="#fff" font-family="Liberation Serif" font-weight="bold" letter-spacing="-1">0.1</text></svg>
<svg style="left:518.6px;top:178.0px" width="36" height="32" viewBox="0 0 36 32"><path d="M0.4 16L8.7 0.4H27.3L35.6 16L27.3 31.6H8.7Z" fill="#0b0b0b" stroke="#0b0b0b" stroke-width=".6" stroke-linejoin="round"/><path d="M2.9 16L10.1 2.9H25.9L33.1 16L25.9 29.1H10.1Z" fill="url(#hg)" stroke="#7a7a7a" stroke-width=".9"/><path d="M10.4 3.1H25.6" stroke="#e0e0e0" stroke-width="1"/><text x="18" y="24" text-anchor="middle" font-size="19" fill="#fff" font-family="Liberation Serif" font-weight="bold">7</text></svg>
<svg style="left:561.0px;top:178.0px" width="36" height="32" viewBox="0 0 36 32"><path d="M0.4 16L8.7 0.4H27.3L35.6 16L27.3 31.6H8.7Z" fill="#0b0b0b" stroke="#0b0b0b" stroke-width=".6" stroke-linejoin="round"/><path d="M2.9 16L10.1 2.9H25.9L33.1 16L25.9 29.1H10.1Z" fill="url(#hg)" stroke="#7a7a7a" stroke-width=".9"/><path d="M10.4 3.1H25.6" stroke="#e0e0e0" stroke-width="1"/><text x="18" y="24" text-anchor="middle" font-size="19" fill="#fff" font-family="Liberation Serif" font-weight="bold">A</text></svg>
<svg style="left:617.7px;top:136.0px" width="36" height="32" viewBox="0 0 36 32"><path d="M0.4 16L8.7 0.4H27.3L35.6 16L27.3 31.6H8.7Z" fill="#0b0b0b" stroke="#0b0b0b" stroke-width=".6" stroke-linejoin="round"/><path d="M2.9 16L10.1 2.9H25.9L33.1 16L25.9 29.1H10.1Z" fill="url(#hg)" stroke="#7a7a7a" stroke-width=".9"/><path d="M10.4 3.1H25.6" stroke="#e0e0e0" stroke-width="1"/><path d="M18 8L20 13L26 10L22 16L28 19L21 19L21 25L17 20L12 24L14 18L8 16L14 14Z" fill="#eee"/><path d="M13 7L16 13M25 24L21 19" stroke="#ccc" stroke-width="1"/></svg>
<svg style="left:617.7px;top:178.0px" width="36" height="32" viewBox="0 0 36 32"><path d="M0.4 16L8.7 0.4H27.3L35.6 16L27.3 31.6H8.7Z" fill="#0b0b0b" stroke="#0b0b0b" stroke-width=".6" stroke-linejoin="round"/><path d="M2.9 16L10.1 2.9H25.9L33.1 16L25.9 29.1H10.1Z" fill="url(#hg)" stroke="#7a7a7a" stroke-width=".9"/><path d="M10.4 3.1H25.6" stroke="#e0e0e0" stroke-width="1"/><path d="M8 12C14 12 20 15 25 21M8 16C13 16 17 18 21 23M9 8C17 8 24 13 28 18" stroke="#aaa" stroke-width="1" fill="none"/><path d="M13 25L25 14" stroke="#fff" stroke-width="2.4"/><path d="M21 12L27 11L26 17Z" fill="#fff"/></svg>
<svg style="left:675.0px;top:136.0px" width="36" height="32" viewBox="0 0 36 32"><path d="M0.4 16L8.7 0.4H27.3L35.6 16L27.3 31.6H8.7Z" fill="#0b0b0b" stroke="#0b0b0b" stroke-width=".6" stroke-linejoin="round"/><path d="M2.9 16L10.1 2.9H25.9L33.1 16L25.9 29.1H10.1Z" fill="url(#hg)" stroke="#7a7a7a" stroke-width=".9"/><path d="M10.4 3.1H25.6" stroke="#e0e0e0" stroke-width="1"/><path d="M15 27C15 20 15 15 12 9M15 18C19 16 21 13 23 10" stroke="#ccc" stroke-width="1.8" fill="none"/><circle cx="12" cy="8" r="2.4" stroke="#ddd" stroke-width="1.4" fill="none"/><circle cx="24" cy="9" r="2.4" stroke="#ddd" stroke-width="1.4" fill="none"/></svg>
<svg style="left:675.0px;top:178.0px" width="36" height="32" viewBox="0 0 36 32"><path d="M0.4 16L8.7 0.4H27.3L35.6 16L27.3 31.6H8.7Z" fill="#0b0b0b" stroke="#0b0b0b" stroke-width=".6" stroke-linejoin="round"/><path d="M2.9 16L10.1 2.9H25.9L33.1 16L25.9 29.1H10.1Z" fill="url(#hg)" stroke="#7a7a7a" stroke-width=".9"/><path d="M10.4 3.1H25.6" stroke="#e0e0e0" stroke-width="1"/><path d="M18 7L27 13L24 24H12L9 13Z" stroke="#bbb" stroke-width="1.6" fill="#555"/><path d="M18 7L18 3M27 13L31 12M24 24L27 28M12 24L9 28M9 13L5 12" stroke="#bbb" stroke-width="1.4"/></svg>
<svg style="left:729.0px;top:134.6px" width="36" height="36" viewBox="0 0 36 36"><rect x=".8" y=".8" width="34.4" height="34.4" rx="4" fill="url(#sqg)" stroke="#3a3a3a" stroke-width="1.4"/><rect x="3" y="3" width="30" height="30" rx="2.5" fill="none" stroke="#fff" stroke-opacity=".6" stroke-width="1"/><path d="M18 7V20M12 14L18 21L24 14" stroke="#111" stroke-width="3" fill="none"/><path d="M8 24H28M9 24V28M13 24V27M17 24V28M21 24V27M25 24V28" stroke="#111" stroke-width="1.2"/></svg>
<svg style="left:729.0px;top:177.0px" width="36" height="36" viewBox="0 0 36 36"><rect x=".8" y=".8" width="34.4" height="34.4" rx="4" fill="#f2cf3a" stroke="#3a3a3a" stroke-width="1.4"/><path d="M6 26C8 22 10 28 12 22C14 15 15 27 18 19C20 12 22 25 25 16C26 12 29 14 29 14" stroke="#b8680a" stroke-width="2.8" fill="none" stroke-linejoin="round"/></svg>
<svg style="left:786.0px;top:134.6px" width="36" height="36" viewBox="0 0 36 36"><rect x=".8" y=".8" width="34.4" height="34.4" rx="4" fill="url(#sqg)" stroke="#3a3a3a" stroke-width="1.4"/><rect x="3" y="3" width="30" height="30" rx="2.5" fill="none" stroke="#fff" stroke-opacity=".6" stroke-width="1"/><rect x="11" y="6" width="14" height="24" fill="#ddd" stroke="#222" stroke-width="1.5"/><rect x="12" y="17" width="12" height="12" fill="#111"/></svg>
<svg style="left:786.0px;top:177.0px" width="36" height="36" viewBox="0 0 36 36"><circle cx="18" cy="18" r="16" fill="url(#sqg)" stroke="#333" stroke-width="1.4"/><circle cx="18" cy="18" r="10.5" fill="#1a1a1a"/><path d="M28 18L33 16V21Z" fill="#333"/></svg>
<svg style="left:828.0px;top:134.6px" width="36" height="36" viewBox="0 0 36 36"><rect x=".8" y=".8" width="34.4" height="34.4" rx="4" fill="url(#sqg)" stroke="#3a3a3a" stroke-width="1.4"/><rect x="3" y="3" width="30" height="30" rx="2.5" fill="none" stroke="#fff" stroke-opacity=".6" stroke-width="1"/><text x="19" y="17" text-anchor="middle" font-size="16" fill="#666" font-family="Liberation Sans" font-weight="bold" font-style="italic">4</text><text x="17" y="33" text-anchor="middle" font-size="18" fill="#222" font-family="Liberation Sans" font-weight="bold" font-style="italic">5</text><path d="M9 17H27" stroke="#555" stroke-width="1.5"/></svg>
<svg style="left:828.0px;top:177.0px" width="36" height="36" viewBox="0 0 36 36"><rect x=".8" y=".8" width="34.4" height="34.4" rx="4" fill="url(#sqg)" stroke="#3a3a3a" stroke-width="1.4"/><rect x="3" y="3" width="30" height="30" rx="2.5" fill="none" stroke="#fff" stroke-opacity=".6" stroke-width="1"/><rect x="7" y="8" width="22" height="5" rx="1" fill="#eee" stroke="#222"/><rect x="7" y="15.5" width="22" height="5" rx="1" fill="#eee" stroke="#222"/><rect x="7" y="23" width="22" height="5" rx="1" fill="#eee" stroke="#222"/></svg>
<svg style="left:870.0px;top:134.6px" width="36" height="36" viewBox="0 0 36 36"><rect x=".8" y=".8" width="34.4" height="34.4" rx="4" fill="url(#sqg)" stroke="#3a3a3a" stroke-width="1.4"/><rect x="3" y="3" width="30" height="30" rx="2.5" fill="none" stroke="#fff" stroke-opacity=".6" stroke-width="1"/><rect x="7" y="7" width="22" height="22" rx="2" fill="#1a1a1a" stroke="#ddd" stroke-width="1.2"/></svg>
<svg style="left:870.0px;top:177.0px" width="36" height="36" viewBox="0 0 36 36"><rect x=".8" y=".8" width="34.4" height="34.4" rx="4" fill="url(#sqg)" stroke="#3a3a3a" stroke-width="1.4"/><rect x="3" y="3" width="30" height="30" rx="2.5" fill="none" stroke="#fff" stroke-opacity=".6" stroke-width="1"/><rect x="5" y="19" width="11" height="13" fill="#fff"/><path d="M18 19V7" stroke="#d33" stroke-width="3"/><path d="M14 9L18 3L22 9Z" fill="#d33"/><path d="M18 19H28" stroke="#27d" stroke-width="3"/><path d="M27 15L33 19L27 23Z" fill="#27d"/><circle cx="18" cy="19" r="2.5" fill="#fff" stroke="#333"/></svg>
<svg style="left:926.5px;top:134.6px" width="36" height="36" viewBox="0 0 36 36"><rect x=".8" y=".8" width="34.4" height="34.4" rx="4" fill="#e88ab0" stroke="#3a3a3a" stroke-width="1.4"/><path d="M3 8C12 4 24 12 33 7V15C24 20 12 12 3 17Z" fill="#d0407a" opacity=".7"/><path d="M3 24H33" stroke="#444" stroke-width="1.5"/><circle cx="8" cy="24" r="2.5" fill="#fff" stroke="#444"/><circle cx="27" cy="24" r="2.5" fill="#fff" stroke="#444"/></svg>
<svg style="left:926.5px;top:177.0px" width="36" height="36" viewBox="0 0 36 36"><rect x=".8" y=".8" width="34.4" height="34.4" rx="4" fill="#2cc02c" stroke="#3a3a3a" stroke-width="1.4"/><rect x="4" y="4" width="8" height="8" fill="#e8e070"/><rect x="20" y="4" width="10" height="9" fill="#60e060"/><rect x="12" y="12" width="8" height="9" fill="#0a7a0a"/><rect x="4" y="20" width="8" height="8" fill="#1a9a1a"/><rect x="12" y="24" width="8" height="8" fill="#111"/><rect x="24" y="22" width="8" height="9" fill="#7ad0e0"/></svg>
<svg style="left:969.0px;top:134.6px" width="36" height="36" viewBox="0 0 36 36"><rect x="1" y="1" width="34" height="34" fill="#1a1a1a"/><text x="18" y="12" text-anchor="middle" font-size="10" fill="#ddd" font-family="Liberation Sans">AUG</text><rect x="3" y="14" width="30" height="19" fill="#3a3a3a"/><text x="18" y="33" text-anchor="middle" font-size="20" fill="#eee" font-family="Liberation Sans" font-weight="bold">20</text></svg>
<svg style="left:969.0px;top:177.0px" width="36" height="36" viewBox="0 0 36 36"><circle cx="18" cy="18" r="16" fill="#111"/><path d="M18 18L22 6M18 18L11 20" stroke="#fff" stroke-width="2.2"/><circle cx="18" cy="4.5" r="1.2" fill="#fff"/><circle cx="31.5" cy="18" r="1.2" fill="#fff"/><circle cx="18" cy="31.5" r="1.2" fill="#fff"/><circle cx="4.5" cy="18" r="1.2" fill="#fff"/></svg>
<svg style="left:1011.0px;top:134.6px" width="36" height="36" viewBox="0 0 36 36"><path d="M18 4L30 14L24 32L9 26L6 12Z" fill="#4ab84a"/><path d="M6 12L18 4L17 20Z" fill="#e8c840"/><path d="M9 26L17 20L24 32Z" fill="#3a7ad8"/><path d="M17 20L30 14" stroke="#c44" stroke-width="1"/><path d="M18 2V34M2 18H34" stroke="#222" stroke-width="1.2"/></svg>
<svg style="left:1011.0px;top:177.0px" width="36" height="36" viewBox="0 0 36 36"><rect x=".8" y=".8" width="34.4" height="34.4" rx="4" fill="url(#sqg)" stroke="#3a3a3a" stroke-width="1.4"/><path d="M2 5H34V11C28 12 24 11 22 15C21 18 24 22 21 27C19 30 15 29 15 26C14 22 18 18 14 14C10 12 6 13 2 12Z" fill="#f08a1a"/><path d="M2 5H34V8H2Z" fill="#ffd060"/></svg>
<svg style="left:1063.0px;top:134.6px" width="36" height="36" viewBox="0 0 36 36"><path d="M20 6C16 10 13 15 12 24M20 6C22 12 24 17 26 24" stroke="#5a3a10" stroke-width="1.5" fill="none"/><path d="M20 6C24 3 29 5 30 8C26 10 22 9 20 6Z" fill="#5cb82a"/><circle cx="11" cy="26" r="6" fill="#d01818"/><circle cx="26" cy="27" r="6" fill="#d01818"/><circle cx="9" cy="24" r="1.6" fill="#fff" opacity=".7"/><circle cx="24" cy="25" r="1.6" fill="#fff" opacity=".7"/></svg>
<svg style="left:1063.0px;top:177.0px" width="36" height="36" viewBox="0 0 36 36"><path d="M1 18L9.5 3H26.5L35 18L26.5 33H9.5Z" fill="#6a6a6a" stroke="#2a2a2a" stroke-width="1.5"/><path d="M4 18L11 6H25L32 18L25 30H11Z" fill="none" stroke="#999" stroke-width="6" stroke-dasharray="1 1.4" opacity=".5"/></svg>
<svg style="left:1106.0px;top:134.6px" width="36" height="36" viewBox="0 0 36 36"><rect x=".8" y=".8" width="34.4" height="34.4" rx="4" fill="url(#sqg)" stroke="#3a3a3a" stroke-width="1.4"/><rect x="3" y="3" width="30" height="30" rx="2.5" fill="none" stroke="#fff" stroke-opacity=".6" stroke-width="1"/><rect x="7" y="8" width="22" height="5" rx="1" fill="#eee" stroke="#222"/><rect x="7" y="15.5" width="22" height="5" rx="1" fill="#eee" stroke="#222"/><rect x="7" y="23" width="22" height="5" rx="1" fill="#eee" stroke="#222"/></svg>
<svg style="left:1106.0px;top:177.0px" width="36" height="36" viewBox="0 0 36 36"><rect x=".8" y=".8" width="34.4" height="34.4" rx="4" fill="url(#sqg)" stroke="#3a3a3a" stroke-width="1.4"/><rect x="3" y="3" width="30" height="30" rx="2.5" fill="none" stroke="#fff" stroke-opacity=".6" stroke-width="1"/><rect x="7" y="8" width="22" height="5" rx="1" fill="#eee" stroke="#222"/><rect x="7" y="15.5" width="22" height="5" rx="1" fill="#eee" stroke="#222"/><rect x="7" y="23" width="22" height="5" rx="1" fill="#eee" stroke="#222"/></svg>
<svg style="left:1148.7px;top:134.6px" width="36" height="36" viewBox="0 0 36 36"><rect x=".8" y=".8" width="34.4" height="34.4" rx="4" fill="url(#sqg)" stroke="#111" stroke-width="1.4"/><path d="M17 31V21M17 23L12 18M17 22L23 16" stroke="#111" stroke-width="2.4" fill="none"/><path d="M6 15C4 10 8 5 12 6C14 3 20 3 22 6C27 5 31 9 30 14C32 17 28 21 24 19C21 22 14 22 11 19C7 21 4 18 6 15Z" fill="#1a1a1a" opacity=".85"/><path d="M2 31H34V34H2Z" fill="#111"/></svg>
<svg style="left:1148.7px;top:177.0px" width="36" height="36" viewBox="0 0 36 36"><path d="M11 4C14 3 16 6 15 9C18 6 24 5 28 9C32 13 31 21 26 24C22 27 16 27 13 24C10 22 9 18 11 15C8 15 6 13 8 10C9 8 10 6 11 4Z" fill="#0a0a0a"/><path d="M18 25V29M3 30H33M3 30L8 27M3 30L8 33M33 30L29 27.5M33 30L29 32.5" stroke="#0a0a0a" stroke-width="2.2" fill="none"/></svg>
<svg style="left:1190.7px;top:134.6px" width="36" height="36" viewBox="0 0 36 36"><path d="M6 12L18 6L31 12V26L18 32L6 26Z" fill="#4a8ad8"/><path d="M6 12L18 18L31 12M18 18V32" stroke="#d01818" stroke-width="2.5" fill="none"/><path d="M6 12L18 6L31 12V26L18 32L6 26Z" fill="none" stroke="#d01818" stroke-width="2.5"/></svg>
<svg style="left:1190.7px;top:177.0px" width="36" height="36" viewBox="0 0 36 36"><text x="2" y="22" font-size="21" fill="#1a2a8a" font-family="Liberation Sans" font-weight="bold">V</text><text x="15" y="32" font-size="18" fill="#1a5ad0" font-family="Liberation Sans" font-weight="bold" transform="rotate(-10 22 26)">B</text></svg>
<svg style="left:1232.0px;top:134.6px" width="36" height="36" viewBox="0 0 36 36"><circle cx="17" cy="18" r="11" fill="#b4b4b4" stroke="#1a1a1a" stroke-width="3"/><path d="M25 10L33 11L28 20Z" fill="#1a1a1a"/></svg>
<svg style="left:1232.0px;top:177.0px" width="36" height="36" viewBox="0 0 36 36"><text x="4" y="27" font-size="14" fill="#111" font-family="Liberation Sans" font-weight="bold" font-style="italic" transform="rotate(-22 18 18)">ABC</text><path d="M5 33C14 28 24 25 33 24" stroke="#222" stroke-width="1.3" fill="none"/></svg>
<svg style="left:1289.0px;top:134.6px" width="36" height="36" viewBox="0 0 36 36"><rect x=".8" y=".8" width="34.4" height="34.4" rx="4" fill="url(#sqg)" stroke="#3a3a3a" stroke-width="1.4"/><rect x="3" y="3" width="30" height="30" rx="2.5" fill="none" stroke="#fff" stroke-opacity=".6" stroke-width="1"/><path d="M9 12A10 10 0 1 0 25 11" stroke="#333" stroke-width="4" fill="none"/><path d="M3 4H9V10H3Z" fill="#111"/><path d="M4 7H8M6 5V9" stroke="#fff" stroke-width="1"/></svg>
<svg style="left:1289.0px;top:177.0px" width="36" height="36" viewBox="0 0 36 36"><rect x=".8" y=".8" width="34.4" height="34.4" rx="4" fill="url(#sqg)" stroke="#3a3a3a" stroke-width="1.4"/><rect x="3" y="3" width="30" height="30" rx="2.5" fill="none" stroke="#fff" stroke-opacity=".6" stroke-width="1"/><path d="M9 12A10 10 0 1 0 25 11" stroke="#333" stroke-width="4" fill="none"/></svg>
<svg style="left:1325.0px;top:134.6px" width="36" height="36" viewBox="0 0 36 36"><rect x=".8" y=".8" width="34.4" height="34.4" rx="4" fill="url(#sqg)" stroke="#3a3a3a" stroke-width="1.4"/><rect x="3" y="3" width="30" height="30" rx="2.5" fill="none" stroke="#fff" stroke-opacity=".6" stroke-width="1"/><circle cx="18" cy="11" r="9" fill="#e82a1a"/><circle cx="15" cy="8" r="3" fill="#ffb060"/><text x="4" y="33" font-size="13" fill="#aaa" font-family="Liberation Sans">REC</text></svg>
<svg style="left:1325.0px;top:177.0px" width="36" height="36" viewBox="0 0 36 36"><path d="M6 30L28 8L33 13L11 35Z" fill="#e8e8e8" stroke="#666" stroke-width="1.4"/><path d="M6 30L3 34L11 35" fill="#f0c080"/></svg>
<svg style="left:38px;top:262px" width="32" height="36" viewBox="0 0 32 36"><path d="M6 2H18L22 6V20H6Z" fill="#f4f4f4" stroke="#333" stroke-width="1.4"/><path d="M1.5 12H12L15 9H30V34H1.5Z" fill="#5ccf4a" stroke="#1a7a12" stroke-width="2"/><path d="M3 30C8 28 12 26 16 28C20 29 25 27 29 28V32H3Z" fill="#e8d060"/></svg>
<svg style="left:79px;top:262px" width="34" height="36" viewBox="0 0 34 36"><path d="M2 4Q2 2 4 2H30Q32 2 32 4V32Q32 34 30 34H4Q2 34 2 32Z" fill="#bdbdbd" stroke="#aaa"/><rect x="7" y="4" width="20" height="12" fill="#dedede"/><rect x="9" y="22" width="16" height="12" fill="#e4e4e4"/><rect x="11" y="24" width="5" height="9" fill="#bbb"/></svg>
<div class="a" style="left:121px;top:263px;width:1px;height:36px;background:#c8c8c8"></div>
<div class="a" style="left:126px;top:264px;width:202px;height:33px;background:#fff;border:1px solid #7a7a7a"></div>
<div class="t" style="left:130px;top:272.2px;font-size:18px;color:#000">100%</div>
<svg style="left:307px;top:275px" width="14" height="10"><path d="M1.5 2L7 7.5L12.5 2" stroke="#333" stroke-width="1.4" fill="none"/></svg>
<svg style="left:333px;top:263px" width="34" height="34" viewBox="0 0 34 34"><path d="M2 12V2H12M22 2H32V12M32 22V32H22M12 32H2V22" stroke="#9a9a9a" stroke-width="4.5" fill="none"/><path d="M14 14L20 20M20 14L14 20" stroke="#aaa" stroke-width="2"/></svg>
<svg style="left:374px;top:277px" width="12" height="8"><path d="M1 1H11L6 6Z" fill="#9a9a9a"/></svg>
<svg style="left:393px;top:268px" width="34" height="24" viewBox="0 0 34 24"><path d="M1 12C8 1 26 1 33 12C26 23 8 23 1 12Z" fill="#e6e6e6" stroke="#b0b0b0" stroke-width="2.5"/><circle cx="17" cy="12" r="6" fill="#c0c0c0" stroke="#aaa" stroke-width="2"/><circle cx="17" cy="12" r="2.5" fill="#999"/></svg>
<svg style="left:433px;top:277px" width="12" height="8"><path d="M1 1H11L6 6Z" fill="#9a9a9a"/></svg>
<svg style="left:450px;top:262px" width="36" height="36" viewBox="0 0 36 36"><path d="M4 33C2 28 10 24 6 18C4 15 6 12 9 14" stroke="#3a1a10" stroke-width="2.5" fill="none"/><path d="M6 30L30 5C33 3 35 6 33 9L12 33Z" fill="#c8201a" stroke="#4a1a10" stroke-width="1.5"/><path d="M14 24L28 10" stroke="#f8a060" stroke-width="3"/></svg>
<div class="a" style="left:491px;top:263px;width:1px;height:36px;background:#c8c8c8"></div>
<svg style="left:498px;top:262px" width="36" height="36" viewBox="0 0 36 36"><path d="M4 14C6 6 16 3 24 8" stroke="#2a7ad8" stroke-width="3.5" fill="none"/><path d="M22 3L28 9L20 11Z" fill="#2a7ad8"/><path d="M33 22C31 30 21 34 13 29" stroke="#d02a6a" stroke-width="3.5" fill="none"/><path d="M15 34L9 28L17 26Z" fill="#d02a6a"/><text x="18" y="23" text-anchor="middle" font-size="12.5" font-weight="bold" fill="#1a1a1a" font-family="Liberation Sans" letter-spacing="-.5">GHA</text></svg>
<svg style="left:540px;top:263px" width="34" height="34" viewBox="0 0 34 34"><rect x="1" y="1" width="32" height="32" fill="#fff" stroke="#111" stroke-width="2"/><rect x="2" y="6" width="8" height="3" fill="#1a2a8a"/><path d="M27 2L31 6M31 2L27 6" stroke="#e22" stroke-width="1.5"/><path d="M10 15L24 11L27 25L13 29Z" fill="#8a8a8a"/><path d="M17 16V23H22" stroke="#3a3" stroke-width="1.2" fill="none"/><path d="M17 23L22 26" stroke="#c33" stroke-width="1.2"/></svg>
<svg style="left:581px;top:263px" width="34" height="34" viewBox="0 0 34 34"><path d="M3 4C14 4 20 30 31 30M3 30C14 30 20 4 31 4M3 13C12 13 22 21 31 21M3 21C12 21 22 13 31 13" stroke="#111" stroke-width="5" fill="none" stroke-linecap="round"/><path d="M3 4C14 4 20 30 31 30M3 30C14 30 20 4 31 4M3 13C12 13 22 21 31 21M3 21C12 21 22 13 31 13" stroke="#fff" stroke-width="2" fill="none" stroke-linecap="round"/></svg>
<div class="a" style="left:623px;top:263px;width:1px;height:36px;background:#c8c8c8"></div>
<svg style="left:630px;top:263px" width="34" height="34" viewBox="0 0 34 34"><path d="M2 10L18 16L13 19L21 28L17 32L9 23L6 27Z" fill="#c2185b" stroke="#222" stroke-width="1.2"/><path d="M16 4L29 16M29 2L17 15" stroke="#e82020" stroke-width="3"/></svg>
<svg style="left:674px;top:263px" width="36" height="34" viewBox="0 0 36 34"><path d="M4 32C12 26 4 14 10 8L14 5" stroke="#f2a0c0" stroke-width="3" fill="none"/><path d="M10 30C16 24 12 12 22 6L28 5" stroke="#c2185b" stroke-width="2.5" fill="none"/><path d="M27 1L33 6L27 10Z" fill="#c2185b"/><rect x="20" y="16" width="12" height="17" rx="6" fill="#f8c0d8" stroke="#c2185b" stroke-width="1.8"/><path d="M26 16V23M20 23H32" stroke="#c2185b" stroke-width="1.5"/></svg>
<svg style="left:714px;top:263px" width="34" height="34" viewBox="0 0 34 34"><path d="M2 5H6M28 5H32M2 17H6M28 17H32M2 29H6M28 29H32" stroke="#c2185b" stroke-width="2.4"/><path d="M9 6L25 28M25 6L9 28" stroke="#c2185b" stroke-width="2.4" stroke-dasharray="4 3"/><path d="M10 17H14M20 17H24" stroke="#c2185b" stroke-width="2.4"/></svg>
<div class="a" style="left:755px;top:263px;width:1px;height:36px;background:#c8c8c8"></div>
<svg style="left:762px;top:263px" width="34" height="34" viewBox="0 0 34 34"><circle cx="17" cy="17" r="15" fill="#f0b0c8" stroke="#c2185b" stroke-width="2.5"/><circle cx="17" cy="17" r="11" fill="none" stroke="#e890b0" stroke-width="1.5"/><path d="M10 17A7 7 0 1 0 17 10" stroke="#fff" stroke-width="2" fill="none"/></svg>
<svg style="left:804px;top:264px" width="36" height="32" viewBox="0 0 36 32"><path d="M18 2C30 2 36 10 34 17C32 22 26 19 24 23C22 28 25 31 18 31C8 31 2 24 2 16C2 8 8 2 18 2Z" fill="#d8d8d8" stroke="#333" stroke-width="2"/><circle cx="11" cy="10" r="3.4" fill="#d8206a"/><circle cx="26" cy="14" r="3.4" fill="#2a6ad8"/><circle cx="13" cy="22" r="3.4" fill="#2ab82a"/></svg>
<div class="a" style="left:34px;top:304px;width:1400px;height:10px;background:repeating-linear-gradient(135deg,#bdbdba 0 1.6px,#cfcfcc 1.6px 3.6px)"></div>
<div class="a" style="left:34px;top:304px;width:10px;height:1117px;background:repeating-linear-gradient(135deg,#bdbdba 0 1.6px,#cfcfcc 1.6px 3.6px)"></div>
<div class="a" style="left:33px;top:304px;width:1px;height:1117px;background:#6e6e6e"></div>
<div class="a" style="left:45px;top:315px;width:1400px;height:1106px;background-color:#e1e0d9;background-image:linear-gradient(90deg,#c8c8c1 1px,transparent 1px),linear-gradient(180deg,#c8c8c1 1px,transparent 1px);background-size:150px 50px;background-position:149px 49px"></div>
<div class="a" style="left:44px;top:314px;width:1px;height:1107px;background:#6a6a6a"></div>
<div class="a" style="left:44px;top:314px;width:1400px;height:1px;background:#7e7e7e"></div>
<div class="t" style="left:55px;top:320.2px;font-size:24px;color:#000;font-family:'Liberation Serif',serif;font-style:italic">Either drag a new component onto the canvas,</div>
<div class="t" style="left:55px;top:348.1px;font-size:24px;color:#000;font-family:'Liberation Serif',serif;font-style:italic">double click the canvas to create a new component</div>
<div class="t" style="left:55px;top:376.4px;font-size:24px;color:#000;font-family:'Liberation Serif',serif;font-style:italic">or open an existing document via the menu or the tiles.</div>
<div class="a" style="left:715px;top:1029px;width:225px;height:114px;background:#0a7a12"></div>
<div class="t" style="left:715px;width:225px;top:1042.2px;text-align:center;font-size:19.5px;font-weight:bold;color:#3db83c">7.0 hours</div>
<div class="t" style="left:715px;width:225px;top:1077.5px;text-align:center;font-size:19.5px;font-weight:bold;letter-spacing:.3px;color:#f0ffe8">Aggregates</div>
<div class="a" style="left:949px;top:1029px;width:225px;height:114px;background:#1e9d14"></div>
<div class="t" style="left:949px;width:225px;top:1042.2px;text-align:center;font-size:19.5px;font-weight:bold;color:#58cc4c">1.2 days</div>
<div class="t" style="left:949px;width:225px;top:1077.5px;text-align:center;font-size:19.5px;font-weight:bold;letter-spacing:.3px;color:#f0ffe8">Remesh3DScan2</div>
<div class="a" style="left:1183px;top:1029px;width:225px;height:114px;background:#0eaa0c"></div>
<div class="t" style="left:1183px;width:225px;top:1042.2px;text-align:center;font-size:19.5px;font-weight:bold;color:#5ad452">1.3 days</div>
<div class="t" style="left:1183px;width:225px;top:1077.5px;text-align:center;font-size:19.5px;font-weight:bold;letter-spacing:.3px;color:#f0ffe8">slExampl...emesh</div>
<div class="a" style="left:715px;top:1152px;width:225px;height:114px;background:#1a760a"></div>
<div class="t" style="left:715px;width:225px;top:1165.2px;text-align:center;font-size:19.5px;font-weight:bold;color:#49a23c">1.3 days</div>
<div class="t" style="left:715px;width:225px;top:1200.5px;text-align:center;font-size:19.5px;font-weight:bold;letter-spacing:.3px;color:#f0ffe8">05-use graph-unroll</div>
<div class="a" style="left:949px;top:1152px;width:225px;height:114px;background:#0aad19"></div>
<div class="t" style="left:949px;width:225px;top:1165.2px;text-align:center;font-size:19.5px;font-weight:bold;color:#52d85a">1.3 days</div>
<div class="t" style="left:949px;width:225px;top:1200.5px;text-align:center;font-size:19.5px;font-weight:bold;letter-spacing:.3px;color:#f0ffe8">00-simple...g meshes</div>
<div class="a" style="left:1183px;top:1152px;width:225px;height:114px;background:#1b861b"></div>
<div class="t" style="left:1183px;width:225px;top:1165.2px;text-align:center;font-size:19.5px;font-weight:bold;color:#4fb04a">1.3 days</div>
<div class="t" style="left:1183px;width:225px;top:1200.5px;text-align:center;font-size:19.5px;font-weight:bold;letter-spacing:.3px;color:#f0ffe8">Remesh3DScan</div>
<div class="a" style="left:715px;top:1275px;width:225px;height:114px;background:#b00000"></div>
<div class="t" style="left:715px;width:225px;top:1288.2px;text-align:center;font-size:19.5px;font-weight:bold;color:#e0302c">2.1 days</div>
<div class="t" style="left:715px;width:225px;top:1323.5px;text-align:center;font-size:19.5px;font-weight:bold;letter-spacing:.3px;color:#ffd8d8">Ladybug installer</div>
<div class="a" style="left:949px;top:1275px;width:225px;height:114px;background:#b00000"></div>
<div class="t" style="left:949px;width:225px;top:1288.2px;text-align:center;font-size:19.5px;font-weight:bold;color:#e0302c">2.1 days</div>
<div class="t" style="left:949px;width:225px;top:1323.5px;text-align:center;font-size:19.5px;font-weight:bold;letter-spacing:.3px;color:#ffd8d8">rendervertexcolors</div>
<div class="a" style="left:1183px;top:1275px;width:225px;height:114px;background:#b00000"></div>
<div class="t" style="left:1183px;width:225px;top:1288.2px;text-align:center;font-size:19.5px;font-weight:bold;color:#e0302c">2.1 days</div>
<div class="t" style="left:1183px;width:225px;top:1323.5px;text-align:center;font-size:19.5px;font-weight:bold;letter-spacing:.3px;color:#ffd8d8">wb-0.9.0.1...stall</div>
<div class="a" style="left:32px;top:1421px;width:1400px;height:31px;background:#f0f0f0;border-top:2px solid #fbfbfb"></div>
<div class="t" style="left:43px;top:1431.5px;font-size:16px;color:#000;">...</div>
<div class="a" style="left:1353px;top:0;width:1013px;height:1646px;background:#191919;box-shadow:-4px 2px 10px rgba(0,0,0,.3)"></div>
<div class="a" style="left:1353px;top:0;width:1013px;height:19px;background:#2b2b2b;overflow:hidden"><svg style="left:14px;top:-12px" width="16" height="20" viewBox="0 0 16 20"><path d="M1 1H13V15L15 15V18H4L1 20Z" fill="#f6d77a"/><path d="M1 1L5 4V18L1 20Z" fill="#ffe9b0"/></svg><div class="a" style="left:40px;top:-8px;width:2px;height:18px;border:1px solid #777;border-radius:1px"></div><svg style="left:59px;top:-9px" width="18" height="18" viewBox="0 0 18 18"><rect x="1" y="0" width="15" height="17" fill="#f2f2f2"/><path d="M5 4L8.5 8L12 4" stroke="#e8501a" stroke-width="2.2" fill="none"/></svg><svg style="left:92px;top:-11px" width="16" height="20" viewBox="0 0 16 20"><path d="M1 1H13V15L15 15V18H4L1 20Z" fill="#f6d77a"/><path d="M1 1L5 4V18L1 20Z" fill="#ffe9b0"/></svg><svg style="left:122px;top:-4px" width="12" height="8"><path d="M1 1H11L6 6Z" fill="#fff"/></svg><div class="a" style="left:148px;top:-8px;width:2px;height:18px;border:1px solid #777;border-radius:1px"></div><div class="t" style="left:157px;top:-12px;font-size:18px;color:#8d8d8d">New folder</div></div>
<div class="a" style="left:1353px;top:19px;width:1013px;height:34px;background:#000"></div>
<div class="a" style="left:1353px;top:19px;width:84px;height:34px;background:#0063c6"></div>
<div class="t" style="left:1384px;top:28.9px;font-size:15.5px;color:#fff;">File</div>
<div class="t" style="left:1458px;top:28.9px;font-size:15.5px;color:#fff;">Home</div>
<div class="t" style="left:1540px;top:28.9px;font-size:15.5px;color:#fff;">Share</div>
<div class="t" style="left:1621px;top:28.9px;font-size:15.5px;color:#fff;">View</div>
<svg style="left:1370px;top:72px" width="24" height="22" viewBox="0 0 24 22"><path d="M3 11H21M11 3L3 11L11 19" stroke="#fff" stroke-width="2" fill="none"/></svg>
<svg style="left:1416px;top:72px" width="24" height="22" viewBox="0 0 24 22"><path d="M3 11H21M13 3L21 11L13 19" stroke="#8a8a8a" stroke-width="2" fill="none"/></svg>
<svg style="left:1453px;top:78px" width="16" height="12" viewBox="0 0 16 12"><path d="M2 2L8 8L14 2" stroke="#fff" stroke-width="1.8" fill="none"/></svg>
<svg style="left:1481px;top:70px" width="22" height="26" viewBox="0 0 22 26"><path d="M11 24V4M3 12L11 4L19 12" stroke="#fff" stroke-width="2" fill="none"/></svg>
<div class="a" style="left:1511px;top:59px;width:900px;height:47px;border:1px solid #5c5c5c;background:#191919"></div>
<svg style="left:1517px;top:72px" width="16" height="20" viewBox="0 0 16 20"><path d="M1 1H13V15L15 15V18H4L1 20Z" fill="#f6d77a"/><path d="M1 1L5 4V18L1 20Z" fill="#ffe9b0"/><path d="M6 2V17" stroke="#e9b95a" stroke-width="2.5"/></svg>
<svg style="left:1549px;top:75px" width="10" height="14" viewBox="0 0 10 14"><path d="M2 1.5L7.5 7L2 12.5" stroke="#7c7c7c" stroke-width="2.4" fill="none"/></svg>
<svg style="left:1639px;top:75px" width="10" height="14" viewBox="0 0 10 14"><path d="M2 1.5L7.5 7L2 12.5" stroke="#7c7c7c" stroke-width="2.4" fill="none"/></svg>
<svg style="left:1762px;top:75px" width="10" height="14" viewBox="0 0 10 14"><path d="M2 1.5L7.5 7L2 12.5" stroke="#7c7c7c" stroke-width="2.4" fill="none"/></svg>
<div class="t" style="left:1569px;top:74.8px;font-size:16.4px;color:#f2f2f2;">This PC</div>
<div class="t" style="left:1660px;top:74.8px;font-size:16.4px;color:#f2f2f2;">Downloads</div>
<div class="t" style="left:1782px;top:74.8px;font-size:16.4px;color:#f2f2f2;">New folder</div>
<div class="a" style="left:1573px;top:113px;width:25px;height:1499px;background:#171717"></div>
<div class="a" style="left:1574px;top:355px;width:24px;height:1211px;background:#4a4a4a"></div>
<svg style="left:1579px;top:121px" width="16" height="10" viewBox="0 0 16 10"><path d="M2 8L8 2L14 8" stroke="#6a6a6a" stroke-width="2" fill="none"/></svg>
<svg style="left:1579px;top:1594px" width="16" height="10" viewBox="0 0 16 10"><path d="M2 2L8 8L14 2" stroke="#6a6a6a" stroke-width="2" fill="none"/></svg>
<div class="a" style="left:1598px;top:113px;width:2px;height:1499px;background:#121212"></div>
<div class="a" style="left:1600px;top:113px;width:3px;height:1499px;background:#2b2c2b"></div>
<div class="a" style="left:1603px;top:113px;width:763px;height:1499px;background:#1f1f1f"></div>
<div class="a" style="left:1353px;top:257px;width:220px;height:36px;background:#4d4d4d"></div>
<div class="a" style="left:1353px;top:1121px;width:220px;height:36px;background:#333"></div>
<svg style="left:1551px;top:123px" width="18" height="18" viewBox="0 0 18 18"><path d="M10 2L16 8L13 9L9 13L8 10L3 15M8 10L5 7L9 5Z" fill="#9aa0a8" stroke="#9aa0a8" stroke-width="1.5"/></svg>
<svg style="left:1579px;top:121px" width="16" height="10" viewBox="0 0 16 10"><path d="M2 8L8 2L14 8" stroke="#6e6e6e" stroke-width="2" fill="none"/></svg>
<div class="a" style="left:1353px;top:113px;width:220px;height:1499px;overflow:hidden">
<svg style="left:52px;top:8px" width="16" height="20" viewBox="0 0 16 20"><path d="M1 1H13V15L15 15V18H4L1 20Z" fill="#f6d77a"/><path d="M1 1L5 4V18L1 20Z" fill="#ffe9b0"/><path d="M6 2V17" stroke="#e9b95a" stroke-width="2.5"/></svg>
<svg style="left:48px;top:18px" width="12" height="12" viewBox="0 0 12 12"><circle cx="6" cy="6" r="5.2" fill="#e8e8e8" stroke="#1aa01a" stroke-width="1.5"/><path d="M3 6L5.2 8.2L9 4" stroke="#1aa01a" stroke-width="1.6" fill="none"/></svg>
<div class="t" style="left:77px;top:10.2px;font-size:17.5px;color:#fff;">GH</div>
<svg style="left:52px;top:44px" width="16" height="20" viewBox="0 0 16 20"><path d="M1 1H13V15L15 15V18H4L1 20Z" fill="#f6d77a"/><path d="M1 1L5 4V18L1 20Z" fill="#ffe9b0"/><path d="M6 2V17" stroke="#e9b95a" stroke-width="2.5"/></svg>
<svg style="left:48px;top:54px" width="12" height="12" viewBox="0 0 12 12"><circle cx="6" cy="6" r="5.2" fill="#e8e8e8" stroke="#1aa01a" stroke-width="1.5"/><path d="M3 6L5.2 8.2L9 4" stroke="#1aa01a" stroke-width="1.6" fill="none"/></svg>
<div class="t" style="left:77px;top:46.2px;font-size:17.5px;color:#fff;">201104_VirginaTech</div>
<svg style="left:52px;top:80px" width="16" height="20" viewBox="0 0 16 20"><path d="M1 1H13V15L15 15V18H4L1 20Z" fill="#f6d77a"/><path d="M1 1L5 4V18L1 20Z" fill="#ffe9b0"/><path d="M6 2V17" stroke="#e9b95a" stroke-width="2.5"/></svg>
<svg style="left:48px;top:90px" width="12" height="12" viewBox="0 0 12 12"><circle cx="6" cy="6" r="5.2" fill="#e8e8e8" stroke="#1aa01a" stroke-width="1.5"/><path d="M3 6L5.2 8.2L9 4" stroke="#1aa01a" stroke-width="1.6" fill="none"/></svg>
<div class="t" style="left:77px;top:82.2px;font-size:17.5px;color:#fff;">210127_Woodburn</div>
<svg style="left:52px;top:116px" width="16" height="20" viewBox="0 0 16 20"><path d="M1 1H13V15L15 15V18H4L1 20Z" fill="#f6d77a"/><path d="M1 1L5 4V18L1 20Z" fill="#ffe9b0"/><path d="M6 2V17" stroke="#e9b95a" stroke-width="2.5"/></svg>
<svg style="left:48px;top:126px" width="12" height="12" viewBox="0 0 12 12"><circle cx="6" cy="6" r="5.2" fill="#e8e8e8" stroke="#1aa01a" stroke-width="1.5"/><path d="M3 6L5.2 8.2L9 4" stroke="#1aa01a" stroke-width="1.6" fill="none"/></svg>
<div class="t" style="left:77px;top:118.2px;font-size:17.5px;color:#fff;">GH PlugIns</div>
<svg style="left:52px;top:152px" width="16" height="20" viewBox="0 0 16 20"><path d="M1 1H13V15L15 15V18H4L1 20Z" fill="#f6d77a"/><path d="M1 1L5 4V18L1 20Z" fill="#ffe9b0"/><path d="M6 2V17" stroke="#e9b95a" stroke-width="2.5"/></svg>
<svg style="left:48px;top:162px" width="12" height="12" viewBox="0 0 12 12"><circle cx="6" cy="6" r="5.2" fill="#e8e8e8" stroke="#1aa01a" stroke-width="1.5"/><path d="M3 6L5.2 8.2L9 4" stroke="#1aa01a" stroke-width="1.6" fill="none"/></svg>
<div class="t" style="left:77px;top:154.2px;font-size:17.5px;color:#fff;">VS</div>
<svg style="left:9px;top:206.5px" width="15" height="10" viewBox="0 0 15 10"><path d="M1.5 1.5L7.5 7.5L13.5 1.5" stroke="#c8c8c8" stroke-width="2" fill="none"/></svg>
<svg style="left:36px;top:199.5px" width="24" height="23" viewBox="0 0 24 23"><path d="M6 1L12 5L6 9L0 5Z M18 1L24 5L18 9L12 5Z M6 9L12 13L6 17L0 13Z M18 9L24 13L18 17L12 13Z M12 14L18 18L12 22L6 18Z" fill="#0d6ad8"/></svg>
<svg style="left:33px;top:210.5px" width="12" height="12" viewBox="0 0 12 12"><circle cx="6" cy="6" r="5.2" fill="#e8e8e8" stroke="#1aa01a" stroke-width="1.5"/><path d="M3 6L5.2 8.2L9 4" stroke="#1aa01a" stroke-width="1.6" fill="none"/></svg>
<div class="t" style="left:66px;top:202.7px;font-size:17.5px;color:#fff;">Dropbox</div>
<svg style="left:24px;top:239.5px" width="10" height="14" viewBox="0 0 10 14"><path d="M2 1.5L7.5 7L2 12.5" stroke="#6f6f6f" stroke-width="2.4" fill="none"/></svg>
<svg style="left:52px;top:236.5px" width="16" height="20" viewBox="0 0 16 20"><path d="M1 1H13V15L15 15V18H4L1 20Z" fill="#7a7a52"/><path d="M1 1L5 4V18L1 20Z" fill="#9a9a8a"/><path d="M6 2V17" stroke="#6a6a45" stroke-width="2.5"/></svg>
<div class="t" style="left:77px;top:238.7px;font-size:17.5px;color:#fff;">.dropbox.cache</div>
<svg style="left:24px;top:275.57px" width="10" height="14" viewBox="0 0 10 14"><path d="M2 1.5L7.5 7L2 12.5" stroke="#6f6f6f" stroke-width="2.4" fill="none"/></svg>
<svg style="left:52px;top:272.57px" width="16" height="20" viewBox="0 0 16 20"><path d="M1 1H13V15L15 15V18H4L1 20Z" fill="#f6d77a"/><path d="M1 1L5 4V18L1 20Z" fill="#ffe9b0"/><path d="M6 2V17" stroke="#e9b95a" stroke-width="2.5"/></svg>
<svg style="left:60px;top:279.57px" width="12" height="14" viewBox="0 0 12 14"><circle cx="6" cy="4" r="3" fill="#8a6a4a"/><path d="M0 14C0 9 3 8 6 8C9 8 12 9 12 14Z" fill="#7aa0c8"/></svg>
<svg style="left:48px;top:282.57px" width="12" height="12" viewBox="0 0 12 12"><circle cx="6" cy="6" r="5.2" fill="#e8e8e8" stroke="#1aa01a" stroke-width="1.5"/><path d="M3 6L5.2 8.2L9 4" stroke="#1aa01a" stroke-width="1.6" fill="none"/></svg>
<div class="t" style="left:77px;top:274.8px;font-size:17.5px;color:#fff;">01 Current Interests</div>
<svg style="left:52px;top:308.64px" width="16" height="20" viewBox="0 0 16 20"><path d="M1 1H13V15L15 15V18H4L1 20Z" fill="#f6d77a"/><path d="M1 1L5 4V18L1 20Z" fill="#ffe9b0"/><path d="M6 2V17" stroke="#e9b95a" stroke-width="2.5"/></svg>
<svg style="left:60px;top:315.64px" width="12" height="14" viewBox="0 0 12 14"><circle cx="6" cy="4" r="3" fill="#8a6a4a"/><path d="M0 14C0 9 3 8 6 8C9 8 12 9 12 14Z" fill="#7aa0c8"/></svg>
<svg style="left:48px;top:318.64px" width="12" height="12" viewBox="0 0 12 12"><circle cx="6" cy="6" r="5.4" fill="#d4d4d4" stroke="#999" stroke-width=".8"/><path d="M3 7.5C3 5.5 4.5 5 5 5.2C5.5 3.8 7.5 3.8 8 5.5C9 5.5 9.5 6.5 9 7.5Z" fill="#fff"/></svg>
<div class="t" style="left:77px;top:310.8px;font-size:17.5px;color:#fff;">1 GB Studio</div>
<svg style="left:24px;top:347.71000000000004px" width="10" height="14" viewBox="0 0 10 14"><path d="M2 1.5L7.5 7L2 12.5" stroke="#6f6f6f" stroke-width="2.4" fill="none"/></svg>
<svg style="left:52px;top:344.71000000000004px" width="16" height="20" viewBox="0 0 16 20"><path d="M1 1H13V15L15 15V18H4L1 20Z" fill="#f6d77a"/><path d="M1 1L5 4V18L1 20Z" fill="#ffe9b0"/><path d="M6 2V17" stroke="#e9b95a" stroke-width="2.5"/></svg>
<svg style="left:48px;top:354.71000000000004px" width="12" height="12" viewBox="0 0 12 12"><circle cx="6" cy="6" r="5.4" fill="#d4d4d4" stroke="#999" stroke-width=".8"/><path d="M3 7.5C3 5.5 4.5 5 5 5.2C5.5 3.8 7.5 3.8 8 5.5C9 5.5 9.5 6.5 9 7.5Z" fill="#fff"/></svg>
<div class="t" style="left:77px;top:346.9px;font-size:17.5px;color:#fff;">1GB</div>
<svg style="left:24px;top:383.78px" width="10" height="14" viewBox="0 0 10 14"><path d="M2 1.5L7.5 7L2 12.5" stroke="#6f6f6f" stroke-width="2.4" fill="none"/></svg>
<svg style="left:52px;top:380.78px" width="16" height="20" viewBox="0 0 16 20"><path d="M1 1H13V15L15 15V18H4L1 20Z" fill="#f6d77a"/><path d="M1 1L5 4V18L1 20Z" fill="#ffe9b0"/><path d="M6 2V17" stroke="#e9b95a" stroke-width="2.5"/></svg>
<svg style="left:48px;top:390.78px" width="12" height="12" viewBox="0 0 12 12"><circle cx="6" cy="6" r="5.4" fill="#d4d4d4" stroke="#999" stroke-width=".8"/><path d="M3 7.5C3 5.5 4.5 5 5 5.2C5.5 3.8 7.5 3.8 8 5.5C9 5.5 9.5 6.5 9 7.5Z" fill="#fff"/></svg>
<div class="t" style="left:77px;top:383.0px;font-size:17.5px;color:#fff;">02 Work</div>
<svg style="left:24px;top:419.85px" width="10" height="14" viewBox="0 0 10 14"><path d="M2 1.5L7.5 7L2 12.5" stroke="#6f6f6f" stroke-width="2.4" fill="none"/></svg>
<svg style="left:52px;top:416.85px" width="16" height="20" viewBox="0 0 16 20"><path d="M1 1H13V15L15 15V18H4L1 20Z" fill="#f6d77a"/><path d="M1 1L5 4V18L1 20Z" fill="#ffe9b0"/><path d="M6 2V17" stroke="#e9b95a" stroke-width="2.5"/></svg>
<svg style="left:48px;top:426.85px" width="12" height="12" viewBox="0 0 12 12"><circle cx="6" cy="6" r="5.4" fill="#d4d4d4" stroke="#999" stroke-width=".8"/><path d="M3 7.5C3 5.5 4.5 5 5 5.2C5.5 3.8 7.5 3.8 8 5.5C9 5.5 9.5 6.5 9 7.5Z" fill="#fff"/></svg>
<div class="t" style="left:77px;top:419.0px;font-size:17.5px;color:#fff;">02 Work (Selective Sync)</div>
<svg style="left:24px;top:455.9200000000001px" width="10" height="14" viewBox="0 0 10 14"><path d="M2 1.5L7.5 7L2 12.5" stroke="#6f6f6f" stroke-width="2.4" fill="none"/></svg>
<svg style="left:52px;top:452.9200000000001px" width="16" height="20" viewBox="0 0 16 20"><path d="M1 1H13V15L15 15V18H4L1 20Z" fill="#f6d77a"/><path d="M1 1L5 4V18L1 20Z" fill="#ffe9b0"/><path d="M6 2V17" stroke="#e9b95a" stroke-width="2.5"/></svg>
<svg style="left:48px;top:462.9200000000001px" width="12" height="12" viewBox="0 0 12 12"><circle cx="6" cy="6" r="5.2" fill="#e8e8e8" stroke="#1aa01a" stroke-width="1.5"/><path d="M3 6L5.2 8.2L9 4" stroke="#1aa01a" stroke-width="1.6" fill="none"/></svg>
<div class="t" style="left:77px;top:455.1px;font-size:17.5px;color:#fff;">03 Teaching</div>
<svg style="left:24px;top:491.99px" width="10" height="14" viewBox="0 0 10 14"><path d="M2 1.5L7.5 7L2 12.5" stroke="#6f6f6f" stroke-width="2.4" fill="none"/></svg>
<svg style="left:52px;top:488.99px" width="16" height="20" viewBox="0 0 16 20"><path d="M1 1H13V15L15 15V18H4L1 20Z" fill="#f6d77a"/><path d="M1 1L5 4V18L1 20Z" fill="#ffe9b0"/><path d="M6 2V17" stroke="#e9b95a" stroke-width="2.5"/></svg>
<svg style="left:48px;top:498.99px" width="12" height="12" viewBox="0 0 12 12"><circle cx="6" cy="6" r="5.4" fill="#d4d4d4" stroke="#999" stroke-width=".8"/><path d="M3 7.5C3 5.5 4.5 5 5 5.2C5.5 3.8 7.5 3.8 8 5.5C9 5.5 9.5 6.5 9 7.5Z" fill="#fff"/></svg>
<div class="t" style="left:77px;top:491.2px;font-size:17.5px;color:#fff;">04 Portfolio</div>
<svg style="left:24px;top:528.06px" width="10" height="14" viewBox="0 0 10 14"><path d="M2 1.5L7.5 7L2 12.5" stroke="#6f6f6f" stroke-width="2.4" fill="none"/></svg>
<svg style="left:52px;top:525.06px" width="16" height="20" viewBox="0 0 16 20"><path d="M1 1H13V15L15 15V18H4L1 20Z" fill="#f6d77a"/><path d="M1 1L5 4V18L1 20Z" fill="#ffe9b0"/><path d="M6 2V17" stroke="#e9b95a" stroke-width="2.5"/></svg>
<svg style="left:48px;top:535.06px" width="12" height="12" viewBox="0 0 12 12"><circle cx="6" cy="6" r="5.4" fill="#d4d4d4" stroke="#999" stroke-width=".8"/><path d="M3 7.5C3 5.5 4.5 5 5 5.2C5.5 3.8 7.5 3.8 8 5.5C9 5.5 9.5 6.5 9 7.5Z" fill="#fff"/></svg>
<div class="t" style="left:77px;top:527.2px;font-size:17.5px;color:#fff;">05 Misc</div>
<svg style="left:24px;top:564.13px" width="10" height="14" viewBox="0 0 10 14"><path d="M2 1.5L7.5 7L2 12.5" stroke="#6f6f6f" stroke-width="2.4" fill="none"/></svg>
<svg style="left:52px;top:561.13px" width="16" height="20" viewBox="0 0 16 20"><path d="M1 1H13V15L15 15V18H4L1 20Z" fill="#f6d77a"/><path d="M1 1L5 4V18L1 20Z" fill="#ffe9b0"/><path d="M6 2V17" stroke="#e9b95a" stroke-width="2.5"/></svg>
<svg style="left:48px;top:571.13px" width="12" height="12" viewBox="0 0 12 12"><circle cx="6" cy="6" r="5.2" fill="#e8e8e8" stroke="#1aa01a" stroke-width="1.5"/><path d="M3 6L5.2 8.2L9 4" stroke="#1aa01a" stroke-width="1.6" fill="none"/></svg>
<div class="t" style="left:77px;top:563.3px;font-size:17.5px;color:#fff;">07 Software</div>
<svg style="left:24px;top:600.2px" width="10" height="14" viewBox="0 0 10 14"><path d="M2 1.5L7.5 7L2 12.5" stroke="#6f6f6f" stroke-width="2.4" fill="none"/></svg>
<svg style="left:52px;top:597.2px" width="16" height="20" viewBox="0 0 16 20"><path d="M1 1H13V15L15 15V18H4L1 20Z" fill="#f6d77a"/><path d="M1 1L5 4V18L1 20Z" fill="#ffe9b0"/><path d="M6 2V17" stroke="#e9b95a" stroke-width="2.5"/></svg>
<svg style="left:48px;top:607.2px" width="12" height="12" viewBox="0 0 12 12"><circle cx="6" cy="6" r="5.2" fill="#e8e8e8" stroke="#1aa01a" stroke-width="1.5"/><path d="M3 6L5.2 8.2L9 4" stroke="#1aa01a" stroke-width="1.6" fill="none"/></svg>
<div class="t" style="left:77px;top:599.4px;font-size:17.5px;color:#fff;">08 Reference</div>
<svg style="left:24px;top:636.27px" width="10" height="14" viewBox="0 0 10 14"><path d="M2 1.5L7.5 7L2 12.5" stroke="#6f6f6f" stroke-width="2.4" fill="none"/></svg>
<svg style="left:52px;top:633.27px" width="16" height="20" viewBox="0 0 16 20"><path d="M1 1H13V15L15 15V18H4L1 20Z" fill="#f6d77a"/><path d="M1 1L5 4V18L1 20Z" fill="#ffe9b0"/><path d="M6 2V17" stroke="#e9b95a" stroke-width="2.5"/></svg>
<svg style="left:48px;top:643.27px" width="12" height="12" viewBox="0 0 12 12"><circle cx="6" cy="6" r="5.4" fill="#d4d4d4" stroke="#999" stroke-width=".8"/><path d="M3 7.5C3 5.5 4.5 5 5 5.2C5.5 3.8 7.5 3.8 8 5.5C9 5.5 9.5 6.5 9 7.5Z" fill="#fff"/></svg>
<div class="t" style="left:77px;top:635.5px;font-size:17.5px;color:#fff;">09 MASH</div>
<svg style="left:24px;top:672.34px" width="10" height="14" viewBox="0 0 10 14"><path d="M2 1.5L7.5 7L2 12.5" stroke="#6f6f6f" stroke-width="2.4" fill="none"/></svg>
<svg style="left:52px;top:669.34px" width="16" height="20" viewBox="0 0 16 20"><path d="M1 1H13V15L15 15V18H4L1 20Z" fill="#f6d77a"/><path d="M1 1L5 4V18L1 20Z" fill="#ffe9b0"/><path d="M6 2V17" stroke="#e9b95a" stroke-width="2.5"/></svg>
<svg style="left:48px;top:679.34px" width="12" height="12" viewBox="0 0 12 12"><circle cx="6" cy="6" r="5.4" fill="#d4d4d4" stroke="#999" stroke-width=".8"/><path d="M3 7.5C3 5.5 4.5 5 5 5.2C5.5 3.8 7.5 3.8 8 5.5C9 5.5 9.5 6.5 9 7.5Z" fill="#fff"/></svg>
<div class="t" style="left:77px;top:671.5px;font-size:17.5px;color:#fff;">10 Website</div>
<svg style="left:24px;top:708.4100000000001px" width="10" height="14" viewBox="0 0 10 14"><path d="M2 1.5L7.5 7L2 12.5" stroke="#6f6f6f" stroke-width="2.4" fill="none"/></svg>
<svg style="left:52px;top:705.4100000000001px" width="16" height="20" viewBox="0 0 16 20"><path d="M1 1H13V15L15 15V18H4L1 20Z" fill="#f6d77a"/><path d="M1 1L5 4V18L1 20Z" fill="#ffe9b0"/><path d="M6 2V17" stroke="#e9b95a" stroke-width="2.5"/></svg>
<svg style="left:48px;top:715.4100000000001px" width="12" height="12" viewBox="0 0 12 12"><circle cx="6" cy="6" r="5.4" fill="#d4d4d4" stroke="#999" stroke-width=".8"/><path d="M3 7.5C3 5.5 4.5 5 5 5.2C5.5 3.8 7.5 3.8 8 5.5C9 5.5 9.5 6.5 9 7.5Z" fill="#fff"/></svg>
<div class="t" style="left:77px;top:707.6px;font-size:17.5px;color:#fff;">11 Rendering</div>
<svg style="left:52px;top:741.48px" width="16" height="20" viewBox="0 0 16 20"><path d="M1 1H13V15L15 15V18H4L1 20Z" fill="#f6d77a"/><path d="M1 1L5 4V18L1 20Z" fill="#ffe9b0"/><path d="M6 2V17" stroke="#e9b95a" stroke-width="2.5"/></svg>
<svg style="left:60px;top:748.48px" width="12" height="14" viewBox="0 0 12 14"><circle cx="6" cy="4" r="3" fill="#8a6a4a"/><path d="M0 14C0 9 3 8 6 8C9 8 12 9 12 14Z" fill="#7aa0c8"/></svg>
<svg style="left:48px;top:751.48px" width="12" height="12" viewBox="0 0 12 12"><circle cx="6" cy="6" r="5.4" fill="#d4d4d4" stroke="#999" stroke-width=".8"/><path d="M3 7.5C3 5.5 4.5 5 5 5.2C5.5 3.8 7.5 3.8 8 5.5C9 5.5 9.5 6.5 9 7.5Z" fill="#fff"/></svg>
<div class="t" style="left:77px;top:743.7px;font-size:17.5px;color:#fff;">2019 1GB Archive</div>
<svg style="left:24px;top:780.55px" width="10" height="14" viewBox="0 0 10 14"><path d="M2 1.5L7.5 7L2 12.5" stroke="#6f6f6f" stroke-width="2.4" fill="none"/></svg>
<svg style="left:50px;top:776.55px" width="22" height="22" viewBox="0 0 22 22"><rect x="1" y="2" width="20" height="6" fill="#c83a8a"/><rect x="1" y="8" width="20" height="6" fill="#3a6ad8"/><rect x="1" y="14" width="20" height="6" fill="#2a9a3a"/><rect x="8" y="1" width="6" height="20" fill="#e8c060"/><rect x="9" y="9" width="4" height="4" fill="#444"/></svg>
<svg style="left:48px;top:787.55px" width="12" height="12" viewBox="0 0 12 12"><circle cx="6" cy="6" r="5.2" fill="#e8e8e8" stroke="#1aa01a" stroke-width="1.5"/><path d="M3 6L5.2 8.2L9 4" stroke="#1aa01a" stroke-width="1.6" fill="none"/></svg>
<div class="t" style="left:77px;top:779.7px;font-size:17.5px;color:#fff;">ARC505A - Undergrad</div>
<svg style="left:12px;top:827px" width="10" height="14" viewBox="0 0 10 14"><path d="M2 1.5L7.5 7L2 12.5" stroke="#6f6f6f" stroke-width="2.4" fill="none"/></svg>
<svg style="left:34px;top:826px" width="26" height="16" viewBox="0 0 26 16"><path d="M5 15C1 15 0 11 3 9C3 5 7 4 9 6C11 1 18 1 19 6C23 6 25 9 24 12C24 14 22 15 20 15Z" fill="#1a7ad8"/></svg>
<div class="t" style="left:66px;top:826.2px;font-size:17.5px;color:#fff;">OneDrive</div>
<svg style="left:9px;top:878px" width="15" height="10" viewBox="0 0 15 10"><path d="M1.5 1.5L7.5 7.5L13.5 1.5" stroke="#c8c8c8" stroke-width="2" fill="none"/></svg>
<svg style="left:36px;top:871px" width="24" height="22" viewBox="0 0 24 22"><path d="M6 2L22 4V15L6 13Z" fill="#3a9ae8" stroke="#bcd" stroke-width="1"/><path d="M2 16L16 18L22 16L8 14Z" fill="#ddd"/><path d="M2 18L16 20V21L2 19Z" fill="#999"/></svg>
<div class="t" style="left:66px;top:874.2px;font-size:17.5px;color:#fff;">This PC</div>
<svg style="left:24px;top:911.0px" width="10" height="14" viewBox="0 0 10 14"><path d="M2 1.5L7.5 7L2 12.5" stroke="#6f6f6f" stroke-width="2.4" fill="none"/></svg>
<svg style="left:52px;top:907.0px" width="22" height="22" viewBox="0 0 22 22"><path d="M11 1L21 5V17L11 21L1 17V5Z" fill="#1ab0e8"/><path d="M1 5L11 9L21 5L11 1Z" fill="#a8e8f8"/><path d="M11 9V21L1 17V5Z" fill="#70d0f0"/></svg>
<div class="t" style="left:77px;top:910.2px;font-size:17.5px;color:#fff;">3D Objects</div>
<svg style="left:24px;top:947.0699999999999px" width="10" height="14" viewBox="0 0 10 14"><path d="M2 1.5L7.5 7L2 12.5" stroke="#6f6f6f" stroke-width="2.4" fill="none"/></svg>
<svg style="left:52px;top:945.0699999999999px" width="22" height="18" viewBox="0 0 22 18"><rect x="1" y="1" width="20" height="14" fill="#1a8ae8"/><rect x="1" y="15" width="20" height="2" fill="#555"/></svg>
<div class="t" style="left:77px;top:946.3px;font-size:17.5px;color:#fff;">Desktop</div>
<svg style="left:24px;top:983.1400000000001px" width="10" height="14" viewBox="0 0 10 14"><path d="M2 1.5L7.5 7L2 12.5" stroke="#6f6f6f" stroke-width="2.4" fill="none"/></svg>
<svg style="left:53px;top:979.1400000000001px" width="18" height="22" viewBox="0 0 18 22"><path d="M1 1H12L17 6V21H1Z" fill="#f4f4f4" stroke="#999" stroke-width="1"/><path d="M4 9H14M4 12H14M4 15H14M4 18H12" stroke="#5a7ab8" stroke-width="1.2"/><rect x="3" y="3" width="5" height="4" fill="#3a6ab8"/></svg>
<div class="t" style="left:77px;top:982.3px;font-size:17.5px;color:#fff;">Documents</div>
<svg style="left:24px;top:1019.21px" width="10" height="14" viewBox="0 0 10 14"><path d="M2 1.5L7.5 7L2 12.5" stroke="#6f6f6f" stroke-width="2.4" fill="none"/></svg>
<svg style="left:52px;top:1015.21px" width="22" height="22" viewBox="0 0 22 22"><path d="M8 1H14V11H19L11 21L3 11H8Z" fill="#2a8ae8"/></svg>
<div class="t" style="left:77px;top:1018.4px;font-size:17.5px;color:#fff;">Downloads</div>
<svg style="left:24px;top:1055.28px" width="10" height="14" viewBox="0 0 10 14"><path d="M2 1.5L7.5 7L2 12.5" stroke="#6f6f6f" stroke-width="2.4" fill="none"/></svg>
<svg style="left:54px;top:1051.28px" width="18" height="22" viewBox="0 0 18 22"><path d="M8 2V16" stroke="#2a9ae8" stroke-width="2.4"/><ellipse cx="5" cy="17" rx="4.5" ry="3.5" fill="#2a9ae8"/><path d="M8 2C10 6 16 7 14 13C15 9 11 8 8 7Z" fill="#2a9ae8"/></svg>
<div class="t" style="left:77px;top:1054.5px;font-size:17.5px;color:#fff;">Music</div>
<svg style="left:24px;top:1091.35px" width="10" height="14" viewBox="0 0 10 14"><path d="M2 1.5L7.5 7L2 12.5" stroke="#6f6f6f" stroke-width="2.4" fill="none"/></svg>
<svg style="left:52px;top:1089.35px" width="22" height="18" viewBox="0 0 22 18"><rect x="1" y="1" width="20" height="16" fill="#f0f0f0"/><rect x="3" y="3" width="16" height="12" fill="#5aa8e8"/><path d="M3 12L9 8L14 11L19 9V15H3Z" fill="#d8d8d0"/></svg>
<div class="t" style="left:77px;top:1090.5px;font-size:17.5px;color:#fff;">Pictures</div>
<svg style="left:24px;top:1127.42px" width="10" height="14" viewBox="0 0 10 14"><path d="M2 1.5L7.5 7L2 12.5" stroke="#6f6f6f" stroke-width="2.4" fill="none"/></svg>
<svg style="left:52px;top:1123.42px" width="22" height="22" viewBox="0 0 22 22"><rect x="1" y="2" width="20" height="18" fill="#333"/><rect x="4" y="4" width="14" height="14" fill="#c87a3a"/><path d="M4 9H18M4 14H18" stroke="#5a3a2a" stroke-width="1"/><path d="M2 4V18M20 4V18" stroke="#ccc" stroke-width="1.2" stroke-dasharray="1.5 1.5"/></svg>
<div class="t" style="left:77px;top:1126.6px;font-size:17.5px;color:#fff;">Videos</div>
<svg style="left:24px;top:1163.49px" width="10" height="14" viewBox="0 0 10 14"><path d="M2 1.5L7.5 7L2 12.5" stroke="#6f6f6f" stroke-width="2.4" fill="none"/></svg>
<svg style="left:52px;top:1163.49px" width="24" height="16" viewBox="0 0 24 16"><path d="M2 9L8 5H22L18 9Z" fill="#f0f0f0"/><path d="M2 9H18V14H2Z" fill="#cfcfcf"/><path d="M18 9L22 5V10L18 14Z" fill="#9a9a9a"/><rect x="13" y="11" width="3" height="1.5" fill="#4a4"/><rect x="2" y="0" width="4" height="3" fill="#1a8ae8"/><rect x="7" y="0" width="4" height="3" fill="#1a8ae8"/><rect x="2" y="4" width="4" height="3" fill="#1a8ae8"/></svg>
<div class="t" style="left:77px;top:1162.7px;font-size:17.5px;color:#fff;">Local Disk (C:)</div>
<svg style="left:24px;top:1199.56px" width="10" height="14" viewBox="0 0 10 14"><path d="M2 1.5L7.5 7L2 12.5" stroke="#6f6f6f" stroke-width="2.4" fill="none"/></svg>
<svg style="left:52px;top:1199.56px" width="24" height="16" viewBox="0 0 24 16"><path d="M2 9L8 5H22L18 9Z" fill="#f0f0f0"/><path d="M2 9H18V14H2Z" fill="#cfcfcf"/><path d="M18 9L22 5V10L18 14Z" fill="#9a9a9a"/><rect x="13" y="11" width="3" height="1.5" fill="#4a4"/></svg>
<div class="t" style="left:77px;top:1198.7px;font-size:17.5px;color:#fff;">Reference (D:)</div>
<svg style="left:24px;top:1235.63px" width="10" height="14" viewBox="0 0 10 14"><path d="M2 1.5L7.5 7L2 12.5" stroke="#6f6f6f" stroke-width="2.4" fill="none"/></svg>
<svg style="left:52px;top:1235.63px" width="24" height="16" viewBox="0 0 24 16"><path d="M2 9L8 5H22L18 9Z" fill="#f0f0f0"/><path d="M2 9H18V14H2Z" fill="#cfcfcf"/><path d="M18 9L22 5V10L18 14Z" fill="#9a9a9a"/><rect x="13" y="11" width="3" height="1.5" fill="#4a4"/></svg>
<div class="t" style="left:77px;top:1234.8px;font-size:17.5px;color:#fff;">Media (E:)</div>
<svg style="left:24px;top:1271.7px" width="10" height="14" viewBox="0 0 10 14"><path d="M2 1.5L7.5 7L2 12.5" stroke="#6f6f6f" stroke-width="2.4" fill="none"/></svg>
<svg style="left:52px;top:1271.7px" width="24" height="16" viewBox="0 0 24 16"><path d="M2 9L8 5H22L18 9Z" fill="#f0f0f0"/><path d="M2 9H18V14H2Z" fill="#cfcfcf"/><path d="M18 9L22 5V10L18 14Z" fill="#9a9a9a"/><rect x="13" y="11" width="3" height="1.5" fill="#4a4"/></svg>
<div class="t" style="left:77px;top:1270.9px;font-size:17.5px;color:#fff;">Temp (F:)</div>
<svg style="left:24px;top:1307.77px" width="10" height="14" viewBox="0 0 10 14"><path d="M2 1.5L7.5 7L2 12.5" stroke="#6f6f6f" stroke-width="2.4" fill="none"/></svg>
<svg style="left:52px;top:1307.77px" width="24" height="16" viewBox="0 0 24 16"><path d="M2 9L8 5H22L18 9Z" fill="#f0f0f0"/><path d="M2 9H18V14H2Z" fill="#cfcfcf"/><path d="M18 9L22 5V10L18 14Z" fill="#9a9a9a"/><rect x="13" y="11" width="3" height="1.5" fill="#4a4"/></svg>
<div class="t" style="left:77px;top:1307.0px;font-size:17.5px;color:#fff;">X (G:)</div>
<svg style="left:24px;top:1343.8400000000001px" width="10" height="14" viewBox="0 0 10 14"><path d="M2 1.5L7.5 7L2 12.5" stroke="#6f6f6f" stroke-width="2.4" fill="none"/></svg>
<svg style="left:52px;top:1343.8400000000001px" width="24" height="16" viewBox="0 0 24 16"><path d="M2 9L8 5H22L18 9Z" fill="#f0f0f0"/><path d="M2 9H18V14H2Z" fill="#cfcfcf"/><path d="M18 9L22 5V10L18 14Z" fill="#9a9a9a"/><rect x="13" y="11" width="3" height="1.5" fill="#4a4"/></svg>
<div class="t" style="left:77px;top:1343.0px;font-size:17.5px;color:#fff;">Work (H:)</div>
<svg style="left:24px;top:1379.91px" width="10" height="14" viewBox="0 0 10 14"><path d="M2 1.5L7.5 7L2 12.5" stroke="#6f6f6f" stroke-width="2.4" fill="none"/></svg>
<svg style="left:52px;top:1379.91px" width="24" height="16" viewBox="0 0 24 16"><path d="M2 9L8 5H22L18 9Z" fill="#f0f0f0"/><path d="M2 9H18V14H2Z" fill="#cfcfcf"/><path d="M18 9L22 5V10L18 14Z" fill="#9a9a9a"/><rect x="13" y="11" width="3" height="1.5" fill="#4a4"/></svg>
<div class="t" style="left:77px;top:1379.1px;font-size:17.5px;color:#fff;">RST (I:)</div>
<svg style="left:12px;top:1427px" width="10" height="14" viewBox="0 0 10 14"><path d="M2 1.5L7.5 7L2 12.5" stroke="#6f6f6f" stroke-width="2.4" fill="none"/></svg>
<svg style="left:36px;top:1427px" width="24" height="16" viewBox="0 0 24 16"><path d="M2 9L8 5H22L18 9Z" fill="#f0f0f0"/><path d="M2 9H18V14H2Z" fill="#cfcfcf"/><path d="M18 9L22 5V10L18 14Z" fill="#9a9a9a"/><rect x="13" y="11" width="3" height="1.5" fill="#4a4"/></svg>
<div class="t" style="left:66px;top:1426.2px;font-size:17.5px;color:#fff;">RST (I:)</div>
<svg style="left:12px;top:1475px" width="10" height="14" viewBox="0 0 10 14"><path d="M2 1.5L7.5 7L2 12.5" stroke="#6f6f6f" stroke-width="2.4" fill="none"/></svg>
<svg style="left:36px;top:1470px" width="24" height="24" viewBox="0 0 24 24"><circle cx="15" cy="9" r="8" fill="#2a7ac8"/><path d="M2 6L16 8V19L2 17Z" fill="#5ab0f0" stroke="#ddd" stroke-width=".8"/><path d="M5 20H14" stroke="#ddd" stroke-width="2"/></svg>
<div class="t" style="left:66px;top:1474.2px;font-size:17.5px;color:#fff;">Network</div>
</div>
<svg style="left:1835px;top:112px" width="14" height="8" viewBox="0 0 14 8"><path d="M2 7L7 2L12 7" stroke="#8a8a8a" stroke-width="1.3" fill="none"/></svg>
<div class="t" style="left:1631px;top:126.8px;font-size:18px;color:#e8e8e8;">Name</div>
<div class="t" style="left:2073px;top:126.8px;font-size:18px;color:#e8e8e8;">Date modified</div>
<div class="t" style="left:2316px;top:126.8px;font-size:18px;color:#e8e8e8;">Type</div>
<div class="a" style="left:2063px;top:113px;width:1px;height:40px;background:#3c3c3c"></div>
<div class="a" style="left:2306px;top:113px;width:1px;height:40px;background:#3c3c3c"></div>
<div class="a" style="left:1603px;top:150px;width:763px;height:200px;overflow:hidden">
<svg style="left:32px;top:21px" width="16" height="20" viewBox="0 0 16 20"><path d="M1 1H13V15L15 15V18H4L1 20Z" fill="#f6d77a"/><path d="M1 1L5 4V18L1 20Z" fill="#ffe9b0"/><path d="M6 2V17" stroke="#e9b95a" stroke-width="2.5"/></svg>
<div class="t" style="left:59px;top:23.2px;font-size:17.5px;color:#fff;">leafvein</div>
<div class="t" style="left:470px;top:22.8px;font-size:18px;color:#fff;">1/6/2021 3:33 AM</div>
<div class="t" style="left:713px;top:22.8px;font-size:18px;color:#fff;">File folder</div>
<svg style="left:32px;top:53.30000000000001px" width="16" height="20" viewBox="0 0 16 20"><path d="M1 1H13V15L15 15V18H4L1 20Z" fill="#f6d77a"/><path d="M1 1L5 4V18L1 20Z" fill="#ffe9b0"/><path d="M6 2V17" stroke="#e9b95a" stroke-width="2.5"/></svg>
<div class="t" style="left:59px;top:55.5px;font-size:17.5px;color:#fff;">simpleexamples</div>
<div class="t" style="left:470px;top:55.1px;font-size:18px;color:#fff;">2/18/2021 5:56 PM</div>
<div class="t" style="left:713px;top:55.1px;font-size:18px;color:#fff;">File folder</div>
<svg style="left:31px;top:84.5px" width="18" height="22" viewBox="0 0 18 22"><path d="M1 1H12L17 6V21H1Z" fill="#e8eef8" stroke="#9ab" stroke-width="1"/><path d="M3 10C6 8 10 9 14 12V19H3Z" fill="#3a7ad8"/><text x="3.5" y="19" font-size="6" fill="#fff" font-family="Liberation Sans" font-weight="bold">GH</text></svg>
<div class="t" style="left:59px;top:87.7px;font-size:17.5px;color:#fff;">BowyerWatsonAlgorithmUsingAnemone.gh</div>
<div class="t" style="left:470px;top:87.3px;font-size:18px;color:#fff;">12/20/2020 6:51 AM</div>
<div class="t" style="left:713px;top:87.3px;font-size:18px;color:#fff;">Grasshopper</div>
<svg style="left:31px;top:116.19999999999999px" width="18" height="22" viewBox="0 0 18 22"><path d="M1 1H12L17 6V21H1Z" fill="#e8f8e8" stroke="#9b9" stroke-width="1"/><path d="M2 9C6 6 10 8 16 11V20H2Z" fill="#2aa02a"/><text x="2.5" y="19" font-size="5.5" fill="#dfd" font-family="Liberation Sans" font-weight="bold">GHA</text></svg>
<div class="t" style="left:59px;top:119.4px;font-size:17.5px;color:#fff;">SuperDelaunay.gha</div>
<div class="t" style="left:470px;top:119.0px;font-size:18px;color:#fff;">12/22/2020 7:25 AM</div>
<div class="t" style="left:713px;top:119.0px;font-size:18px;color:#fff;">Grasshopper</div>
<svg style="left:31px;top:148.39999999999998px" width="18" height="22" viewBox="0 0 18 22"><path d="M1 1H12L17 6V21H1Z" fill="#e8eef8" stroke="#9ab" stroke-width="1"/><path d="M3 10C6 8 10 9 14 12V19H3Z" fill="#3a7ad8"/><text x="3.5" y="19" font-size="6" fill="#fff" font-family="Liberation Sans" font-weight="bold">GH</text></svg>
<div class="t" style="left:59px;top:151.6px;font-size:17.5px;color:#fff;">SuperDelaunayTest.gh</div>
<div class="t" style="left:470px;top:151.2px;font-size:18px;color:#fff;">12/22/2020 7:22 AM</div>
<div class="t" style="left:713px;top:151.2px;font-size:18px;color:#fff;">Grasshopper</div>
</div>
<div class="a" style="left:1353px;top:1612px;width:1013px;height:34px;background:#323232;box-shadow:0 3px 5px rgba(0,0,0,.35)"></div>
<div class="t" style="left:1376px;top:1621.8px;font-size:18px;color:#f0f0f0;">5 items</div>
<div class="a" style="left:1448px;top:1621px;width:2px;height:19px;background:#fff"></div>
<svg style="left:1548px;top:262px" width="20" height="28" viewBox="0 0 20 28"><path d="M1 1V23L6.5 18L10.5 26.5L14 25L10 17H17.5Z" fill="#fff" stroke="#000" stroke-width="1.2"/></svg>
</body></html>
